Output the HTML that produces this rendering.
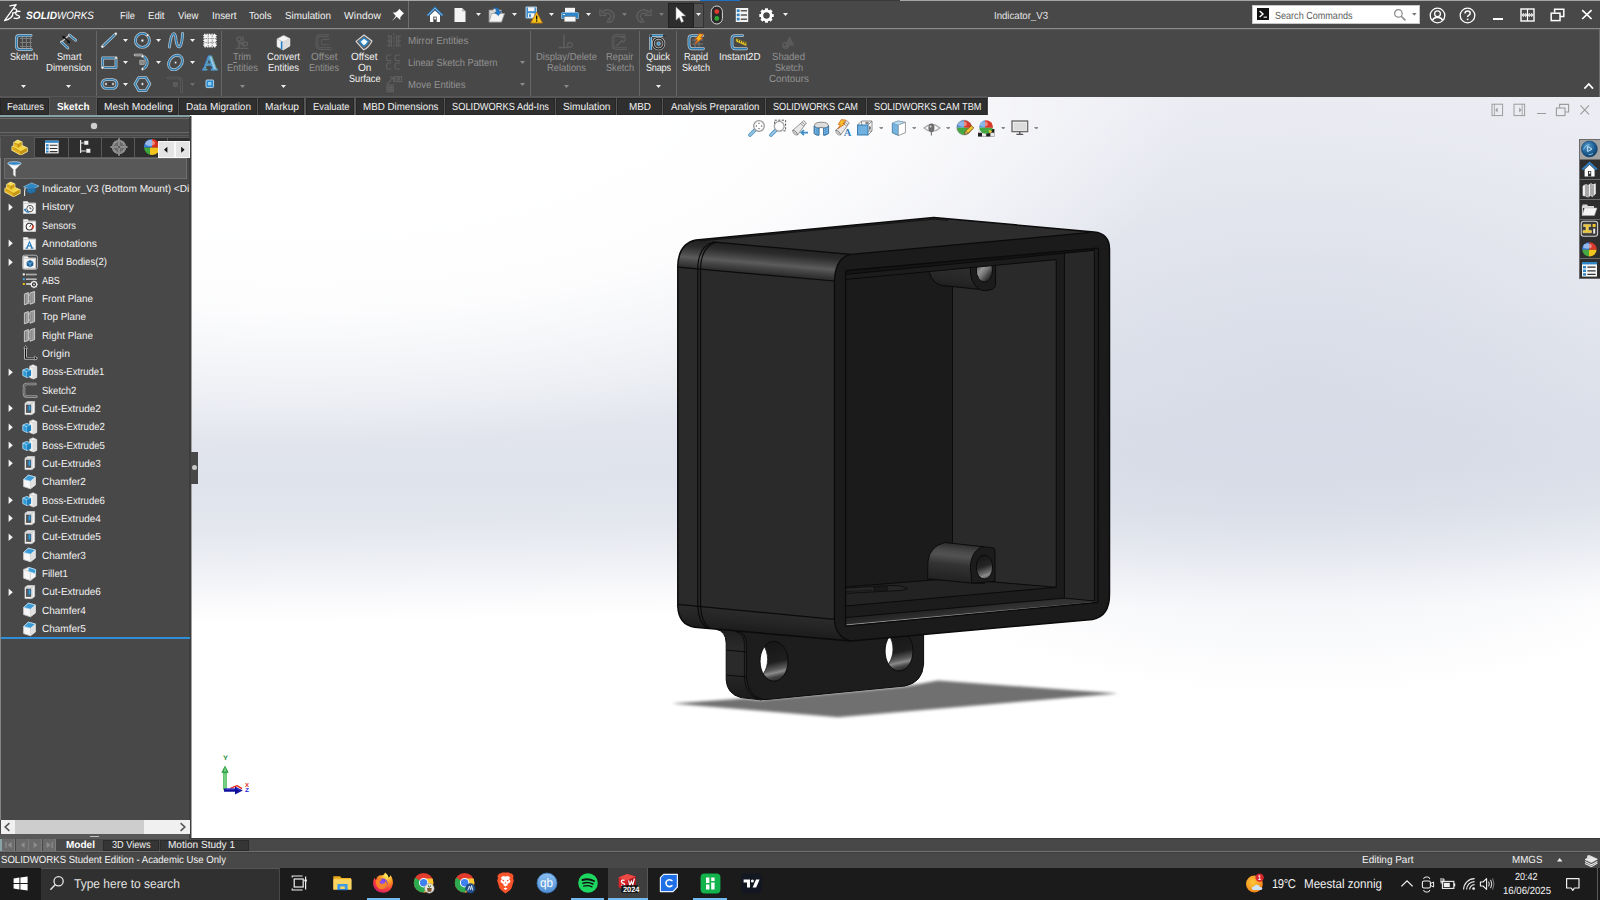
<!DOCTYPE html>
<html><head><meta charset="utf-8"><title>SOLIDWORKS - Indicator_V3</title>
<style>
html,body{margin:0;padding:0;}
body{width:1600px;height:900px;position:relative;overflow:hidden;background:#484848;font-family:"Liberation Sans",sans-serif;}
#root{position:absolute;left:0;top:0;width:1600px;height:900px;overflow:hidden;}
#root div,#root svg,#root span{position:absolute;}
#root span{white-space:nowrap;display:block;transform:rotate(0.03deg);}
</style></head>
<body><div id="root">
<div style="left:190px;top:96px;width:1410px;height:743px;background:radial-gradient(ellipse 900px 350px at 110px 0px, rgba(255,255,255,1) 0%, rgba(255,255,255,0.97) 50%, rgba(255,255,255,0.85) 62%, rgba(255,255,255,0.45) 80%, rgba(255,255,255,0) 100%),radial-gradient(ellipse 540px 310px at 1110px 292px, rgba(206,211,225,0.56) 0%, rgba(206,211,225,0.44) 35%, rgba(206,211,225,0.2) 68%, rgba(206,211,225,0) 100%),linear-gradient(179deg,#ecedf3 0%,#ebecf3 15%,#eaecf2 30%,#e5e8ef 40%,#e1e4ed 46%,#dfe3ec 51%,#e4e7ee 56.5%,#eef0f5 61.5%,#fafafc 66%,#ffffff 69%,#ffffff 100%);"></div>
<div style="left:191px;top:116px;width:1px;height:722.5px;background:#a2a2a2;"></div>
<div style="left:0px;top:0px;width:1600px;height:29px;background:#484848;"></div>
<div style="left:0px;top:0px;width:1600px;height:1px;background:#a6a6a6;"></div>
<div style="left:700px;top:0px;width:40px;height:1px;background:#1f6fc4;"></div>
<div style="left:740px;top:0px;width:160px;height:1px;background:#3a3a3a;"></div>
<div style="left:0px;top:28px;width:1600px;height:1px;background:#8c8c8c;"></div>
<div style="left:0px;top:29px;width:1600px;height:68px;background:#484848;"></div>
<div style="left:0px;top:29px;width:1600px;height:1px;background:#565656;"></div>
<div style="left:1599px;top:29px;width:1px;height:68px;background:#6c6c6c;"></div>
<svg style="left:4px;top:3px;" width="20" height="20"><g fill="none" stroke="#fff" stroke-width="1.35" stroke-linecap="round" stroke-linejoin="round"><path d="M6 2.9 L12.2 1.6 L9 5.8 Q13.4 5.6 12.6 8.2 Q12 9.7 9.8 9.9"/><path d="M8.5 6.6 L0.5 17.6 Q9.4 15.2 8.9 9.6"/><path d="M16 8.4 Q11.4 7.8 11.6 10.4 Q12 12 13.8 12.4 Q16.2 13.2 15.4 14.6 Q14 16 10 15.2"/></g></svg>
<svg style="left:391px;top:8px;" width="14" height="14"><path d="M8.2 0.8 L13 5.6 L11.6 6.4 L9.2 9.4 L9.4 12 L5.6 8.8 L1 13 L4.8 8 L1.8 4.4 L4.6 4.6 L7.4 2.2 Z" fill="#fff"/></svg>
<div style="left:408px;top:1px;width:1px;height:27px;background:#6e6e6e;"></div>
<svg style="left:426px;top:6px;" width="18" height="18"><path d="M1.5 9.5 L9 2 L16.5 9.5" fill="none" stroke="#2f7fc2" stroke-width="2.2" stroke-linejoin="miter"/><path d="M1.5 9.5 L9 2 L16.5 9.5" fill="none" stroke="#9fd0f0" stroke-width="0.6"/><path d="M4 9.2 L9 4.6 L14 9.2 V16 H4 Z" fill="#fff"/><rect x="7.3" y="10.6" width="3.4" height="5.4" fill="#484848"/><rect x="8.3" y="11.4" width="1.6" height="2" fill="#fff"/></svg>
<svg style="left:453px;top:7px;" width="14" height="16"><path d="M1.5 1 H9 L12.5 4.5 V15 H1.5 Z" fill="#f4f4f4"/><path d="M9 1 V4.5 H12.5 Z" fill="#bdbdbd"/></svg>
<svg style="left:475.5px;top:13.0px;" width="5" height="3"><path d="M0 0H5L2.5 3Z" fill="#f0f0f0"/></svg>
<svg style="left:487px;top:5px;" width="19" height="19"><path d="M2 5 H6 L7 3.5 H11 V5 H14.5 V17 H2 Z" fill="#d8d8d8" stroke="#8a8a8a" stroke-width="0.8"/><path d="M4.5 8.5 H17.5 L14.5 17 H2 Z" fill="#f3f3f3" stroke="#9a9a9a" stroke-width="0.8"/><path d="M7 2.5 Q11.5 2 12.2 6.5 L14.4 6.2 L11.4 10.6 L7.6 7.4 L9.8 7 Q9.4 4.2 7 2.5 Z" fill="#1f78c8" stroke="#0f4f90" stroke-width="0.5"/></svg>
<svg style="left:512.0px;top:13.0px;" width="5" height="3"><path d="M0 0H5L2.5 3Z" fill="#f0f0f0"/></svg>
<svg style="left:524px;top:5px;" width="20" height="20"><path d="M2 2 H12.5 V13 H2 Z" fill="#3c8fd0" stroke="#cfe6f7" stroke-width="0.8"/><rect x="4" y="2.4" width="6.5" height="3.8" fill="#f4f4f4"/><rect x="4" y="8.2" width="6.5" height="4.4" fill="#f4f4f4"/><rect x="5" y="9.2" width="2" height="2.6" fill="#3c8fd0"/><path d="M12.6 7 L18.4 18 H6.8 Z" fill="#f5c31c" stroke="#c47a10" stroke-width="0.9" stroke-linejoin="round"/><rect x="12" y="10.6" width="1.3" height="4" fill="#111"/><rect x="12" y="15.3" width="1.3" height="1.4" fill="#111"/></svg>
<svg style="left:548.5px;top:13.0px;" width="5" height="3"><path d="M0 0H5L2.5 3Z" fill="#f0f0f0"/></svg>
<svg style="left:561px;top:7px;" width="18" height="16"><rect x="4" y="0.8" width="10" height="5" fill="#f4f4f4"/><path d="M1.5 5.5 H16.5 Q17.5 5.5 17.5 6.5 V11.5 H0.5 V6.5 Q0.5 5.5 1.5 5.5 Z" fill="#2f86c8" stroke="#a9d4f2" stroke-width="0.6"/><rect x="3.2" y="9.6" width="11.6" height="5.2" fill="#f7f7f7" stroke="#777" stroke-width="0.5"/><rect x="1.8" y="7" width="2.2" height="1" fill="#d6ecfa"/></svg>
<svg style="left:585.5px;top:13.0px;" width="5" height="3"><path d="M0 0H5L2.5 3Z" fill="#f0f0f0"/></svg>
<svg style="left:599px;top:7px;" width="16" height="16"><path d="M4.2 7 A4.9 4.9 0 1 1 9.6 14.2" fill="none" stroke="#686868" stroke-width="4.6"/><path d="M4.2 7 A4.9 4.9 0 1 1 9.6 14.2" fill="none" stroke="#4d4d4d" stroke-width="3"/><path d="M0.8 2.2 V8.6 H7.2 Z" fill="#4d4d4d" stroke="#686868" stroke-width="0.8"/><path d="M9.6 11.6 L7.6 15.4 L11.6 15.2 Z" fill="#4d4d4d" stroke="#686868" stroke-width="0.7"/></svg>
<svg style="left:622.0px;top:13.0px;" width="5" height="3"><path d="M0 0H5L2.5 3Z" fill="#7a7a7a"/></svg>
<svg style="left:635.5px;top:7px;" width="16" height="16"><g transform="translate(16 0) scale(-1 1)"><path d="M4.2 7 A4.9 4.9 0 1 1 9.6 14.2" fill="none" stroke="#686868" stroke-width="4.6"/><path d="M4.2 7 A4.9 4.9 0 1 1 9.6 14.2" fill="none" stroke="#4d4d4d" stroke-width="3"/><path d="M0.8 2.2 V8.6 H7.2 Z" fill="#4d4d4d" stroke="#686868" stroke-width="0.8"/><path d="M9.6 11.6 L7.6 15.4 L11.6 15.2 Z" fill="#4d4d4d" stroke="#686868" stroke-width="0.7"/></g></svg>
<svg style="left:658.5px;top:13.0px;" width="5" height="3"><path d="M0 0H5L2.5 3Z" fill="#7a7a7a"/></svg>
<div style="left:667.5px;top:2.5px;width:26px;height:25px;background:#2d2d2d;border:1px solid #222;box-sizing:border-box;"></div>
<div style="left:693.5px;top:2.5px;width:10.5px;height:25px;background:#505050;border:1px solid #333;border-left:none;box-sizing:border-box;"></div>
<svg style="left:674px;top:6px;" width="14" height="18"><path d="M2 1 V14.2 L5.2 11.2 L7.4 16.4 L9.6 15.4 L7.4 10 H11.6 Z" fill="#fff" stroke="#999" stroke-width="0.5"/></svg>
<svg style="left:695.5px;top:13.0px;" width="5" height="3"><path d="M0 0H5L2.5 3Z" fill="#f0f0f0"/></svg>
<svg style="left:710px;top:5px;" width="14" height="20"><rect x="1.2" y="1" width="11.2" height="18" rx="5.6" fill="#2a2a2a" stroke="#d8d8d8" stroke-width="1"/><circle cx="6.8" cy="6.6" r="2.4" fill="#e03a2c"/><circle cx="6.8" cy="13.4" r="2.4" fill="#2fa835"/></svg>
<svg style="left:735px;top:7px;" width="14" height="16"><rect x="0.8" y="1" width="12.4" height="14" fill="#f2f2f2"/><rect x="1.8" y="2.4" width="2.8" height="2.6" fill="#2d82c6"/><rect x="1.8" y="6.6" width="2.8" height="2.6" fill="#2d82c6"/><rect x="1.8" y="10.8" width="2.8" height="2.6" fill="#2d82c6"/><rect x="5.8" y="3.2" width="6.2" height="1.2" fill="#333"/><rect x="5.8" y="7.4" width="6.2" height="1.2" fill="#333"/><rect x="5.8" y="11.6" width="6.2" height="1.2" fill="#333"/></svg>
<svg style="left:759px;top:7.5px;" width="15" height="15"><g transform="translate(7.5 7.5)"><g fill="#fff"><rect x="-1.5" y="-7.2" width="3" height="3.6" transform="rotate(0)"/><rect x="-1.5" y="-7.2" width="3" height="3.6" transform="rotate(45)"/><rect x="-1.5" y="-7.2" width="3" height="3.6" transform="rotate(90)"/><rect x="-1.5" y="-7.2" width="3" height="3.6" transform="rotate(135)"/><rect x="-1.5" y="-7.2" width="3" height="3.6" transform="rotate(180)"/><rect x="-1.5" y="-7.2" width="3" height="3.6" transform="rotate(225)"/><rect x="-1.5" y="-7.2" width="3" height="3.6" transform="rotate(270)"/><rect x="-1.5" y="-7.2" width="3" height="3.6" transform="rotate(315)"/></g><circle r="4.6" fill="none" stroke="#fff" stroke-width="2.6"/></g></svg>
<svg style="left:782.5px;top:13.0px;" width="5" height="3"><path d="M0 0H5L2.5 3Z" fill="#f0f0f0"/></svg>
<div style="left:1251.5px;top:5px;width:168.5px;height:18.5px;background:#ffffff;border:1px solid #c8c8c8;box-sizing:border-box;"></div>
<div style="left:1257px;top:8px;width:12px;height:12px;background:#111;"></div>
<svg style="left:1257px;top:8px;" width="12" height="12"><path d="M2.6 3 L6 6 L2.6 9" fill="none" stroke="#fff" stroke-width="1.4"/><rect x="6.6" y="8.6" width="3.4" height="1.1" fill="#fff"/></svg>
<svg style="left:1393px;top:8px;" width="14" height="14"><circle cx="5.4" cy="5.4" r="3.8" fill="none" stroke="#8a8a8a" stroke-width="1.2"/><path d="M8.2 8.2 L12.4 12.4" stroke="#8a8a8a" stroke-width="1.6"/></svg>
<svg style="left:1412.2px;top:13.1px;" width="4.6" height="2.8"><path d="M0 0H4.6L2.3 2.8Z" fill="#777"/></svg>
<svg style="left:1429px;top:6.5px;" width="17" height="17"><circle cx="8.5" cy="8.5" r="7.3" fill="none" stroke="#fff" stroke-width="1.3"/><circle cx="8.5" cy="6.8" r="2.9" fill="none" stroke="#fff" stroke-width="1.3"/><path d="M3.4 13.4 Q5 10 8.5 10.6 Q12 10 13.6 13.4" fill="none" stroke="#fff" stroke-width="1.3"/></svg>
<svg style="left:1459px;top:6.5px;" width="17" height="17"><circle cx="8.5" cy="8.5" r="7.3" fill="none" stroke="#fff" stroke-width="1.3"/><path d="M6 6.6 Q6 4 8.6 4 Q11.2 4 11.2 6.2 Q11.2 7.6 9.6 8.4 Q8.6 9 8.6 10" fill="none" stroke="#fff" stroke-width="1.5"/><rect x="7.8" y="11.6" width="1.6" height="1.6" fill="#fff"/></svg>
<div style="left:1493px;top:18px;width:9.5px;height:2.2px;background:#ffffff;"></div>
<svg style="left:1520px;top:8px;" width="15" height="14"><rect x="1" y="1" width="13" height="12" fill="none" stroke="#fff" stroke-width="1.4"/><path d="M7.5 1 V13" stroke="#fff" stroke-width="1.2"/><path d="M2.6 7 H6.4 M8.6 7 H12.4" stroke="#fff" stroke-width="1.3"/><path d="M3.8 5 L1.8 7 L3.8 9 M5.2 5 L7.2 7 L5.2 9 M9.8 5 L7.8 7 L9.8 9 M11.2 5 L13.2 7 L11.2 9" fill="none" stroke="#fff" stroke-width="0.9"/></svg>
<svg style="left:1550px;top:8px;" width="15" height="14"><path d="M4.6 4.4 V1.2 H13.8 V8.4 H10" fill="none" stroke="#fff" stroke-width="1.5"/><rect x="1.2" y="5.2" width="8.8" height="7.4" fill="none" stroke="#fff" stroke-width="1.5"/></svg>
<svg style="left:1581px;top:9px;" width="12" height="12"><path d="M1.2 1.2 L10.6 10 M10.6 1.2 L1.2 10" stroke="#fff" stroke-width="1.7"/></svg>
<svg style="left:1583px;top:82px;" width="12" height="8"><path d="M1.4 6.6 L5.8 2 L10 6.6" fill="none" stroke="#fff" stroke-width="1.7"/></svg>
<div style="left:0px;top:96.4px;width:987.6px;height:18.8px;background:#565656;"></div>
<div style="left:-0.19999999999999996px;top:97.6px;width:48.7px;height:17.4px;background:#2f2f2f;border:1px solid #272727;box-sizing:border-box;"></div>
<div style="left:50.099999999999994px;top:97.2px;width:45.7px;height:19px;background:#484848;"></div>
<div style="left:97.39999999999999px;top:97.6px;width:80.39999999999999px;height:17.4px;background:#2f2f2f;border:1px solid #272727;box-sizing:border-box;"></div>
<div style="left:179.4px;top:97.6px;width:77.19999999999996px;height:17.4px;background:#2f2f2f;border:1px solid #272727;box-sizing:border-box;"></div>
<div style="left:258.2px;top:97.6px;width:46.0px;height:17.4px;background:#2f2f2f;border:1px solid #272727;box-sizing:border-box;"></div>
<div style="left:305.8px;top:97.6px;width:48.599999999999966px;height:17.4px;background:#2f2f2f;border:1px solid #272727;box-sizing:border-box;"></div>
<div style="left:356.0px;top:97.6px;width:87.80000000000001px;height:17.4px;background:#2f2f2f;border:1px solid #272727;box-sizing:border-box;"></div>
<div style="left:445.40000000000003px;top:97.6px;width:109.19999999999999px;height:17.4px;background:#2f2f2f;border:1px solid #272727;box-sizing:border-box;"></div>
<div style="left:556.1999999999999px;top:97.6px;width:59.40000000000009px;height:17.4px;background:#2f2f2f;border:1px solid #272727;box-sizing:border-box;"></div>
<div style="left:617.1999999999999px;top:97.6px;width:44.600000000000136px;height:17.4px;background:#2f2f2f;border:1px solid #272727;box-sizing:border-box;"></div>
<div style="left:663.4px;top:97.6px;width:101.20000000000005px;height:17.4px;background:#2f2f2f;border:1px solid #272727;box-sizing:border-box;"></div>
<div style="left:766.1999999999999px;top:97.6px;width:99.60000000000014px;height:17.4px;background:#2f2f2f;border:1px solid #272727;box-sizing:border-box;"></div>
<div style="left:867.4px;top:97.6px;width:119.20000000000005px;height:17.4px;background:#2f2f2f;border:1px solid #272727;box-sizing:border-box;"></div>
<div style="left:986.8px;top:96.4px;width:0.8px;height:18.8px;background:#4a4a4a;"></div>
<div style="left:0px;top:116px;width:190.5px;height:723px;background:#484848;"></div>
<div style="left:0px;top:115.4px;width:190px;height:1.5px;background:#86a2a5;"></div>
<div style="left:0px;top:118px;width:189px;height:1px;background:#686868;"></div>
<div style="left:0px;top:132px;width:189px;height:1px;background:#6a6a6a;"></div>
<div style="left:0px;top:134.5px;width:189px;height:1px;background:#5a5a5a;"></div>
<div style="left:91px;top:123px;width:6px;height:6px;border-radius:3px;background:#cfcfcf;box-shadow:0 0 1px #eee;"></div>
<div style="left:189px;top:117px;width:2px;height:722px;background:#3d3d3d;"></div>
<div style="left:0px;top:158px;width:1.2px;height:662px;background:#858585;"></div>
<div style="left:190.5px;top:452px;width:7.5px;height:32px;background:#484848;"></div>
<div style="left:191.8px;top:464.6px;width:5px;height:5px;border-radius:2.5px;background:#c8c8c8;"></div>
<div style="left:0px;top:838px;width:1600px;height:30px;background:#484848;"></div>
<div style="left:190px;top:838.4px;width:1410px;height:1.1px;background:#383838;"></div>
<div style="left:0px;top:851px;width:1600px;height:1px;background:#707070;"></div>
<div style="left:0px;top:852px;width:1600px;height:1px;background:#3e3e3e;"></div>
<div style="left:1px;top:820px;width:188.5px;height:14px;background:#f0f0f0;"></div>
<div style="left:15px;top:820px;width:129px;height:14px;background:#cdcdcd;"></div>
<svg style="left:3px;top:822px;" width="8" height="10"><path d="M6.4 1.2 L2.2 5 L6.4 8.8" fill="none" stroke="#555" stroke-width="1.6"/></svg>
<svg style="left:179px;top:822px;" width="8" height="10"><path d="M1.6 1.2 L5.8 5 L1.6 8.8" fill="none" stroke="#555" stroke-width="1.6"/></svg>
<div style="left:0px;top:834px;width:189px;height:4.5px;background:#585858;"></div>
<div style="left:90px;top:835.6px;width:9px;height:1.4px;background:#bdbdbd;"></div>
<div style="left:0px;top:839px;width:2px;height:12px;background:#8aa3a6;"></div>
<div style="left:2px;top:839px;width:13px;height:12px;background:#6b6b6b;border-right:1px solid #7c7c7c;box-sizing:border-box;"></div>
<div style="left:15.5px;top:839px;width:13px;height:12px;background:#6b6b6b;border-right:1px solid #7c7c7c;box-sizing:border-box;"></div>
<div style="left:29px;top:839px;width:13px;height:12px;background:#6b6b6b;border-right:1px solid #7c7c7c;box-sizing:border-box;"></div>
<div style="left:42.5px;top:839px;width:13px;height:12px;background:#6b6b6b;border-right:1px solid #7c7c7c;box-sizing:border-box;"></div>
<svg style="left:2px;top:839px;" width="13" height="12"><path d="M4 3 V9" stroke="#8e8e8e" stroke-width="1.2"/><path d="M9.6 3 L5.6 6 L9.6 9 Z" fill="#8e8e8e"/></svg>
<svg style="left:15.5px;top:839px;" width="13" height="12"><path d="M8.6 3 L4.6 6 L8.6 9 Z" fill="#8e8e8e"/></svg>
<svg style="left:29px;top:839px;" width="13" height="12"><path d="M4.6 3 L8.6 6 L4.6 9 Z" fill="#8e8e8e"/></svg>
<svg style="left:42.5px;top:839px;" width="13" height="12"><path d="M3.6 3 L7.6 6 L3.6 9 Z" fill="#8e8e8e"/><path d="M9.2 3 V9" stroke="#8e8e8e" stroke-width="1.2"/></svg>
<div style="left:56px;top:839px;width:46px;height:12px;background:#484848;"></div>
<div style="left:103px;top:839.5px;width:55.5px;height:11.5px;background:#353535;border:1px solid #2a2a2a;box-sizing:border-box;"></div>
<div style="left:160px;top:839.5px;width:89px;height:11.5px;background:#353535;border:1px solid #2a2a2a;box-sizing:border-box;"></div>
<svg style="left:1557px;top:858px;" width="6" height="4"><path d="M0 3.4 H5.4 L2.7 0 Z" fill="#f0f0f0"/></svg>
<svg style="left:1584px;top:853px;" width="15" height="14"><path d="M1 6.5 L7 3.2 L13.4 6.2 L7.4 9.6 Z" fill="#e8e8e8" stroke="#fff" stroke-width="0.6"/><path d="M1 8.6 L7.4 11.8 L13.4 8.4" fill="none" stroke="#e8e8e8" stroke-width="1.1"/><path d="M1 10.6 L7.4 13.6 L13.4 10" fill="none" stroke="#e8e8e8" stroke-width="1.1"/><circle cx="5" cy="4" r="2" fill="#ddd"/></svg>
<div style="left:96.4px;top:31px;width:1px;height:65px;background:#666666;"></div>
<div style="left:221.4px;top:31px;width:1px;height:65px;background:#666666;"></div>
<div style="left:530.4px;top:31px;width:1px;height:65px;background:#666666;"></div>
<div style="left:639.4px;top:31px;width:1px;height:65px;background:#666666;"></div>
<div style="left:676.4px;top:31px;width:1px;height:65px;background:#666666;"></div>
<svg style="left:14px;top:33px;" width="20" height="20"><g stroke="#7c7c7c" stroke-width="1"><path d="M6 5.5 H18 M6 9.5 H18 M6 13.5 H18 M8.5 3.5 V16 M12.5 3.5 V16 M16.5 3.5 V16"/></g><path d="M17 2.4 H5.4 Q2.4 2.4 2.4 5.4 V13 Q2.4 16.6 6 16.6 H17.4" fill="none" stroke="#bcc3c8" stroke-width="2.9" stroke-linecap="round" stroke-linejoin="round" /><path d="M17 2.4 H5.4 Q2.4 2.4 2.4 5.4 V13 Q2.4 16.6 6 16.6 H17.4" fill="none" stroke="#2a7db4" stroke-width="1.45" stroke-linecap="round" stroke-linejoin="round" /></svg>
<svg style="left:20.5px;top:84.5px;" width="5" height="3"><path d="M0 0H5L2.5 3Z" fill="#f0f0f0"/></svg>
<svg style="left:58px;top:32px;" width="20" height="20"><path d="M11.4 3 L17.6 8.2" fill="none" stroke="#bcc3c8" stroke-width="2.9" stroke-linecap="round" stroke-linejoin="round" /><path d="M11.4 3 L17.6 8.2" fill="none" stroke="#2a7db4" stroke-width="1.45" stroke-linecap="round" stroke-linejoin="round" /><path d="M3.4 10 L9.8 16" fill="none" stroke="#bcc3c8" stroke-width="2.9" stroke-linecap="round" stroke-linejoin="round" /><path d="M3.4 10 L9.8 16" fill="none" stroke="#2a7db4" stroke-width="1.45" stroke-linecap="round" stroke-linejoin="round" /><path d="M11.4 3 L3.4 10" stroke="#c9c9c9" stroke-width="1.4" fill="none"/><path d="M5 4.6 L11.4 10" stroke="#111" stroke-width="1.3"/><path d="M4 3.8 L7.6 4.6 L5.2 7 Z M12.4 11.2 L8.8 10.6 L11 8.2 Z" fill="#111"/></svg>
<svg style="left:66.0px;top:84.5px;" width="5" height="3"><path d="M0 0H5L2.5 3Z" fill="#f0f0f0"/></svg>
<svg style="left:100px;top:31px;" width="20" height="18"><path d="M2.6 15.4 L15.6 3" fill="none" stroke="#bcc3c8" stroke-width="2.9" stroke-linecap="round" stroke-linejoin="round" /><path d="M2.6 15.4 L15.6 3" fill="none" stroke="#2a7db4" stroke-width="1.45" stroke-linecap="round" stroke-linejoin="round" /><circle cx="15.8" cy="2.8" r="1.4" fill="#fff" stroke="#555" stroke-width="0.5"/><circle cx="2.4" cy="15.6" r="1.4" fill="#fff" stroke="#555" stroke-width="0.5"/></svg>
<svg style="left:123.0px;top:39.0px;" width="5" height="3"><path d="M0 0H5L2.5 3Z" fill="#f0f0f0"/></svg>
<svg style="left:133px;top:31px;" width="20" height="18"><path d="M2.4 9.4 A7 7 0 1 0 16.4 9.4 A7 7 0 1 0 2.4 9.4" fill="none" stroke="#bcc3c8" stroke-width="2.9" stroke-linecap="round" stroke-linejoin="round" /><path d="M2.4 9.4 A7 7 0 1 0 16.4 9.4 A7 7 0 1 0 2.4 9.4" fill="none" stroke="#2a7db4" stroke-width="1.45" stroke-linecap="round" stroke-linejoin="round" /><circle cx="9.4" cy="9.6" r="1.3" fill="#fff" stroke="#555" stroke-width="0.5"/><circle cx="14.6" cy="4.2" r="1.3" fill="#fff" stroke="#555" stroke-width="0.5"/></svg>
<svg style="left:156.0px;top:39.0px;" width="5" height="3"><path d="M0 0H5L2.5 3Z" fill="#f0f0f0"/></svg>
<svg style="left:166px;top:31px;" width="20" height="18"><path d="M3.4 16 Q5 2.6 7.6 2.8 Q9.8 3 10 9.4 Q11.2 16.4 13.4 15.8 Q16 14.6 16.6 2.4" fill="none" stroke="#bcc3c8" stroke-width="2.9" stroke-linecap="round" stroke-linejoin="round" /><path d="M3.4 16 Q5 2.6 7.6 2.8 Q9.8 3 10 9.4 Q11.2 16.4 13.4 15.8 Q16 14.6 16.6 2.4" fill="none" stroke="#2a7db4" stroke-width="1.45" stroke-linecap="round" stroke-linejoin="round" /></svg>
<svg style="left:189.5px;top:39.0px;" width="5" height="3"><path d="M0 0H5L2.5 3Z" fill="#f0f0f0"/></svg>
<svg style="left:202px;top:32px;" width="16" height="17"><rect x="2.2" y="2.6" width="11.6" height="12" fill="#f4f4f4" stroke="#ffffff" stroke-width="1.8" stroke-dasharray="1.3 1.1"/><path d="M6.2 1 V16 M10.2 1 V16 M1 6.6 H15.2 M1 10.6 H15.2" stroke="#8a8a8a" stroke-width="0.9" stroke-dasharray="1.6 0.8"/></svg>
<svg style="left:100px;top:53px;" width="20" height="18"><path d="M2.6 5 H16 V14.6 H2.6 Z" fill="none" stroke="#bcc3c8" stroke-width="2.9" stroke-linecap="round" stroke-linejoin="round" /><path d="M2.6 5 H16 V14.6 H2.6 Z" fill="none" stroke="#2a7db4" stroke-width="1.45" stroke-linecap="round" stroke-linejoin="round" /><circle cx="16" cy="5" r="1.4" fill="#fff" stroke="#555" stroke-width="0.5"/><circle cx="2.6" cy="14.6" r="1.4" fill="#fff" stroke="#555" stroke-width="0.5"/></svg>
<svg style="left:123.0px;top:61.0px;" width="5" height="3"><path d="M0 0H5L2.5 3Z" fill="#f0f0f0"/></svg>
<svg style="left:133px;top:53px;" width="20" height="18"><rect x="6.8" y="7.2" width="4.4" height="4.4" fill="#8a8a8a" stroke="#bbb" stroke-width="0.6"/><path d="M9.6 3.2 A6.8 6.8 0 0 1 9.6 16" fill="none" stroke="#bcc3c8" stroke-width="2.9" stroke-linecap="round" stroke-linejoin="round" /><path d="M9.6 3.2 A6.8 6.8 0 0 1 9.6 16" fill="none" stroke="#2a7db4" stroke-width="1.45" stroke-linecap="round" stroke-linejoin="round" /><path d="M2 2 H8.6" stroke="#d8d8d8" stroke-width="2.4" stroke-linecap="round"/><path d="M2 2 H8.6" stroke="#555" stroke-width="1" stroke-linecap="round"/><circle cx="9.6" cy="3.2" r="1.3" fill="#fff" stroke="#555" stroke-width="0.5"/><circle cx="9.6" cy="16" r="1.3" fill="#fff" stroke="#555" stroke-width="0.5"/></svg>
<svg style="left:156.0px;top:61.0px;" width="5" height="3"><path d="M0 0H5L2.5 3Z" fill="#f0f0f0"/></svg>
<svg style="left:166px;top:53px;" width="20" height="18"><path d="M2.6 12 A5.6 7.4 40 1 0 16.4 7 A5.6 7.4 40 1 0 2.6 12" fill="none" stroke="#bcc3c8" stroke-width="2.9" stroke-linecap="round" stroke-linejoin="round" /><path d="M2.6 12 A5.6 7.4 40 1 0 16.4 7 A5.6 7.4 40 1 0 2.6 12" fill="none" stroke="#2a7db4" stroke-width="1.45" stroke-linecap="round" stroke-linejoin="round" /><circle cx="9.6" cy="9.6" r="1.1" fill="#fff" stroke="#555" stroke-width="0.5"/></svg>
<svg style="left:189.5px;top:61.0px;" width="5" height="3"><path d="M0 0H5L2.5 3Z" fill="#f0f0f0"/></svg>
<svg style="left:199.5px;top:52px;" width="20" height="20"><text x="10" y="17.6" text-anchor="middle" font-family="Liberation Serif" font-weight="bold" font-size="21" fill="#9fcbe6" stroke="#2a7db4" stroke-width="1">A</text><text x="10" y="17.6" text-anchor="middle" font-family="Liberation Serif" font-weight="bold" font-size="21" fill="none" stroke="#d6e8f3" stroke-width="0.35" stroke-dasharray="0.8 0.8">A</text></svg>
<svg style="left:100px;top:75px;" width="20" height="18"><path d="M6.4 4.6 H12.6 A4.4 4.4 0 0 1 12.6 13.4 H6.4 A4.4 4.4 0 0 1 6.4 4.6 Z" fill="none" stroke="#bcc3c8" stroke-width="2.9" stroke-linecap="round" stroke-linejoin="round" /><path d="M6.4 4.6 H12.6 A4.4 4.4 0 0 1 12.6 13.4 H6.4 A4.4 4.4 0 0 1 6.4 4.6 Z" fill="none" stroke="#2a7db4" stroke-width="1.45" stroke-linecap="round" stroke-linejoin="round" /><path d="M6.2 9 H12.8" stroke="#111" stroke-width="1" stroke-dasharray="1.4 1.2"/><circle cx="6" cy="9" r="1.2" fill="#fff" stroke="#555" stroke-width="0.5"/><circle cx="13" cy="9" r="1.2" fill="#fff" stroke="#555" stroke-width="0.5"/></svg>
<svg style="left:123.0px;top:83.0px;" width="5" height="3"><path d="M0 0H5L2.5 3Z" fill="#f0f0f0"/></svg>
<svg style="left:133px;top:75px;" width="20" height="18"><path d="M5.8 2.6 H13 L16.8 9 L13 15.6 H5.8 L2 9 Z" fill="none" stroke="#bcc3c8" stroke-width="2.9" stroke-linecap="round" stroke-linejoin="round" /><path d="M5.8 2.6 H13 L16.8 9 L13 15.6 H5.8 L2 9 Z" fill="none" stroke="#2a7db4" stroke-width="1.45" stroke-linecap="round" stroke-linejoin="round" /><circle cx="9.4" cy="9" r="1.2" fill="#fff" stroke="#555" stroke-width="0.5"/></svg>
<svg style="left:166px;top:74px;" width="20" height="20"><path d="M2.4 4 H11 Q15.6 4 15.6 8.6 V18" fill="none" stroke="#5e5e5e" stroke-width="2.6" stroke-linecap="round"/><path d="M2.4 4 H11 Q15.6 4 15.6 8.6 V18" fill="none" stroke="#444" stroke-width="1"/><rect x="7.4" y="8.6" width="4" height="4" fill="#5a5a5a" stroke="#666" stroke-width="0.5"/></svg>
<svg style="left:189.5px;top:83.0px;" width="5" height="3"><path d="M0 0H5L2.5 3Z" fill="#6e6e6e"/></svg>
<svg style="left:205px;top:79px;" width="10" height="10"><rect x="1" y="1" width="7.6" height="7.6" rx="1" fill="#2f8bcb" stroke="#bcdcf2" stroke-width="0.9"/><rect x="3" y="3" width="3.4" height="3.4" fill="#8fd0f5"/></svg>
<svg style="left:233px;top:33px;" width="18" height="18"><g fill="none" stroke="#5f5f5f" stroke-width="1.3"><path d="M2.6 15.4 H15.4 M6 15.4 V10 H10 V3"/><circle cx="6" cy="6" r="2.2"/><circle cx="12.6" cy="10.8" r="2"/><path d="M4.6 7.8 L11 13.6"/></g></svg>
<div style="left:233px;top:61.6px;width:4.4px;height:0.9px;background:#929292;"></div>
<svg style="left:239.5px;top:84.5px;" width="5" height="3"><path d="M0 0H5L2.5 3Z" fill="#8a8a8a"/></svg>
<svg style="left:275px;top:33px;" width="17" height="19"><path d="M2 6 L8.6 2.4 L15 5.6 V13 L8.2 17 L2 13.6 Z" fill="#f4f4f4" stroke="#d0d0d0" stroke-width="0.6"/><path d="M2 6 L8.2 9 L15 5.6 M8.2 9 V17" fill="none" stroke="#bdbdbd" stroke-width="0.8"/><path d="M8.2 9 V17 L15 13 V5.6 Z" fill="#dcdcdc"/><path d="M6.6 8.4 V16.2" stroke="#1f7dc4" stroke-width="1.6"/></svg>
<svg style="left:280.5px;top:84.5px;" width="5" height="3"><path d="M0 0H5L2.5 3Z" fill="#f0f0f0"/></svg>
<svg style="left:314px;top:33px;" width="20" height="19"><path d="M15 2.6 H6.4 Q3 2.6 3 6 V11.6 Q3 15.6 7 15.6 H17.4" fill="none" stroke="#5d5d5d" stroke-width="2.8" stroke-linejoin="round"/><path d="M15 2.6 H6.4 Q3 2.6 3 6 V11.6 Q3 15.6 7 15.6 H17.4" fill="none" stroke="#484848" stroke-width="0.9"/><path d="M15 6.4 H9 Q7.4 6.4 7.4 8 V10 Q7.4 11.8 9.2 11.8 H15.6" fill="none" stroke="#5a5a5a" stroke-width="1.1"/></svg>
<svg style="left:354px;top:33px;" width="20" height="19"><path d="M2 8.4 L10 2 L18 8 Q15 14.6 9.6 16.8 Z" fill="#5c5c5c" stroke="#d8d8d8" stroke-width="1.1" stroke-linejoin="round"/><path d="M5.6 8.6 L10 5 L14.6 8.4 Q12.6 12 9.6 13.2 Z" fill="#f4fbff" stroke="#2b86c5" stroke-width="1.5" stroke-linejoin="round"/></svg>
<svg style="left:385px;top:32px;" width="18" height="18"><g fill="none" stroke="#5e5e5e" stroke-width="1.2"><path d="M9 1 V17" stroke-dasharray="2.4 1.4"/><path d="M2 4 H6.4 V14 H2 M4.2 4 V14 M2 9 H6.4"/><path d="M16 4 H11.6 V14 H16 M13.8 4 V14 M11.6 9 H16"/></g></svg>
<svg style="left:385px;top:53px;" width="18" height="18"><g fill="none" stroke="#5e5e5e" stroke-width="1.2"><path d="M6.4 2 H3.4 Q1.6 2 1.6 3.8 V6 Q1.6 7.6 3.4 7.6 H6.4 M15 2 H12 Q10 2 10 3.8 V6 Q10 7.6 12 7.6 H15"/><path d="M6.4 10 H3.4 Q1.6 10 1.6 12.2 V14.4 Q1.6 16 3.4 16 H6.4 M15 10 H12 Q10 10 10 12.2 V14.4 Q10 16 12 16 H15"/></g></svg>
<svg style="left:520.0px;top:61.0px;" width="5" height="3"><path d="M0 0H5L2.5 3Z" fill="#8a8a8a"/></svg>
<svg style="left:385px;top:75px;" width="18" height="18"><g fill="none" stroke="#5e5e5e" stroke-width="1.2"><rect x="9.6" y="1.6" width="7" height="5"/><rect x="12" y="3" width="2.4" height="2"/><path d="M2 9 L8.4 2.6 M4.6 2.4 H8.6 V6.4"/><path d="M2 10 H8.4 V16.6 H2 Z M4.2 10 V16.6 M6.2 10 V16.6 M2 12.6 H8.4 M2 14.6 H8.4"/></g></svg>
<svg style="left:520.0px;top:83.0px;" width="5" height="3"><path d="M0 0H5L2.5 3Z" fill="#8a8a8a"/></svg>
<svg style="left:556px;top:33px;" width="20" height="18"><g fill="none" stroke="#5e5e5e" stroke-width="1.5"><path d="M8 1.6 V14 M2.6 14.4 H13.4"/><circle cx="14" cy="12" r="2.4" stroke-width="1.1"/></g></svg>
<svg style="left:563.5px;top:84.5px;" width="5" height="3"><path d="M0 0H5L2.5 3Z" fill="#8a8a8a"/></svg>
<svg style="left:610px;top:33px;" width="20" height="19"><g fill="none" stroke="#5e5e5e"><path d="M15.6 2.6 H6 Q3 2.6 3 5.6 V12 Q3 15.6 6.6 15.6 H17" stroke-width="2.6" stroke-linejoin="round"/><path d="M6.4 13 L12.6 6.8 M11 4.6 Q14.6 3.4 15.6 6.8 Q14 9.6 11.6 8.6" stroke-width="1.2"/></g><path d="M15.6 2.6 H6 Q3 2.6 3 5.6 V12 Q3 15.6 6.6 15.6 H17" fill="none" stroke="#484848" stroke-width="0.8"/></svg>
<svg style="left:648px;top:33px;" width="20" height="19"><path d="M2.6 17 V2.6 H16.6" fill="none" stroke="#c9c9c9" stroke-width="2.8"/><path d="M2.6 17 V2.6 H16.6" fill="none" stroke="#2b86c5" stroke-width="1.5"/><rect x="1.4" y="1.4" width="2.4" height="2.4" fill="#333"/><rect x="15" y="1.4" width="2.4" height="2.4" fill="#333"/><circle cx="10.6" cy="10.6" r="5.4" fill="none" stroke="#d0d0d0" stroke-width="2.6"/><circle cx="10.6" cy="10.6" r="5.4" fill="none" stroke="#222" stroke-width="1.3"/><circle cx="10.6" cy="10.6" r="1.7" fill="#2f8fd2" stroke="#cfe6f5" stroke-width="0.6"/></svg>
<svg style="left:655.5px;top:84.5px;" width="5" height="3"><path d="M0 0H5L2.5 3Z" fill="#f0f0f0"/></svg>
<svg style="left:686px;top:33px;" width="20" height="19"><g stroke="#777" stroke-width="1"><path d="M6 7 H17 M6 11 H17 M9 4 V14 M13 4 V14"/></g><path d="M16.8 2.6 H6 Q3 2.6 3 5.6 V12 Q3 15.8 6.6 15.8 H17.4" fill="none" stroke="#bcc3c8" stroke-width="2.9" stroke-linecap="round" stroke-linejoin="round" /><path d="M16.8 2.6 H6 Q3 2.6 3 5.6 V12 Q3 15.8 6.6 15.8 H17.4" fill="none" stroke="#2a7db4" stroke-width="1.45" stroke-linecap="round" stroke-linejoin="round" /><path d="M13.4 0.8 L17.6 1.2 L14.6 4.6 L16.8 5 L9 11 L11.6 6.8 L9.4 6.4 Z" fill="#f6b61c" stroke="#c8541a" stroke-width="0.8" stroke-linejoin="round"/></svg>
<svg style="left:729px;top:33px;" width="20" height="19"><path d="M13.6 2.6 H6 Q3 2.6 3 5.6 V12 Q3 15.8 6.6 15.8 H17.4" fill="none" stroke="#bcc3c8" stroke-width="2.9" stroke-linecap="round" stroke-linejoin="round" /><path d="M13.6 2.6 H6 Q3 2.6 3 5.6 V12 Q3 15.8 6.6 15.8 H17.4" fill="none" stroke="#2a7db4" stroke-width="1.45" stroke-linecap="round" stroke-linejoin="round" /><path d="M6.6 8.6 L16.6 13" stroke="#555" stroke-width="1"/><path d="M7 5.6 L17.4 9.4 V13 L7 8.6 Z" fill="#f2cf2e" stroke="#7a6a1a" stroke-width="0.6"/><path d="M9.4 6.6 V8.4 M11.6 7.4 V9.4 M13.8 8.2 V10 M15.8 9 V11" stroke="#333" stroke-width="0.9"/></svg>
<svg style="left:780px;top:34px;" width="18" height="16"><path d="M9.6 2 L14.6 11.6 H4.6 Z" fill="#5a5a5a"/><circle cx="5.6" cy="11.4" r="3" fill="none" stroke="#5a5a5a" stroke-width="1.3"/><path d="M3 12 Q6 14 9 11.4" fill="none" stroke="#666" stroke-width="1"/></svg>
<div style="left:0px;top:136.5px;width:189px;height:21px;background:#5a5a5a;"></div>
<div style="left:1px;top:137px;width:33px;height:20.5px;background:#484848;"></div>
<div style="left:35px;top:137.5px;width:32.5px;height:19px;background:#2e2e2e;"></div>
<div style="left:68.8px;top:137.5px;width:31.799999999999997px;height:19px;background:#2e2e2e;"></div>
<div style="left:102px;top:137.5px;width:31.599999999999994px;height:19px;background:#2e2e2e;"></div>
<div style="left:135px;top:137.5px;width:31.599999999999994px;height:19px;background:#2e2e2e;"></div>
<div style="left:168px;top:137.5px;width:21px;height:19px;background:#2e2e2e;"></div>
<svg style="left:10.5px;top:138.5px" width="17.34" height="16.32" viewBox="0 0 17 16"><path d="M3 3.6 L6.6 1.4 L10.6 3.2 V6.6 L15.8 9 V12 L9.6 15.4 L1.2 10.8 V7.6 L3 6.8 Z" fill="#e3b21e" stroke="#f6e79a" stroke-width="1.5" stroke-linejoin="round"/><path d="M3 3.6 L6.6 1.4 L10.6 3.2 L7 5.4 Z" fill="#f8dc52"/><path d="M3 3.6 L7 5.4 V8.6 L3 6.8 Z" fill="#e6b422"/><path d="M7 5.4 L10.6 3.2 V6.6 L7 8.6 Z" fill="#cfa018"/><path d="M1.2 7.6 L3 6.8 L7 8.6 L10.6 6.6 L15.8 9 L9.6 12.4 Z" fill="#f6d544"/><path d="M1.2 7.6 L9.6 12.4 V15.4 L1.2 10.8 Z" fill="#e2ad1c"/><path d="M9.6 12.4 L15.8 9 V12 L9.6 15.4 Z" fill="#c59614"/><path d="M3 3.6 L7 5.4 L10.6 3.2 M7 5.4 V8.6 M1.2 7.6 L9.6 12.4 L15.8 9 M9.6 12.4 V15.4" fill="none" stroke="#9a7410" stroke-width="0.45"/></svg>
<svg style="left:44px;top:139px;" width="16" height="16"><rect x="1" y="1.6" width="13.6" height="12.8" fill="#f4f4f4"/><rect x="1" y="1.6" width="13.6" height="2.2" fill="#2f86c6"/><rect x="2" y="5.2" width="2.6" height="2.2" fill="#2f86c6"/><rect x="2" y="8.4" width="2.6" height="2.2" fill="#2f86c6"/><rect x="2" y="11.6" width="2.6" height="2" fill="#2f86c6"/><path d="M5.8 6.3 H13.4 M5.8 9.5 H13.4 M5.8 12.6 H13.4" stroke="#333" stroke-width="1.1"/></svg>
<svg style="left:78px;top:139px;" width="14" height="16"><path d="M2.6 1 V14 M2.6 4 H6.6 M2.6 12 H8.6" fill="none" stroke="#e8e8e8" stroke-width="1.2"/><rect x="6" y="1.6" width="4.6" height="4.4" fill="#f2f2f2" stroke="#333" stroke-width="0.5"/><rect x="8" y="9.6" width="4.6" height="4.4" fill="#f2f2f2" stroke="#333" stroke-width="0.5"/></svg>
<svg style="left:109.5px;top:138px;" width="18" height="18"><circle cx="9" cy="9" r="6.2" fill="#6a6a6a" stroke="#e0e0e0" stroke-width="1.6"/><circle cx="9" cy="9" r="6.2" fill="none" stroke="#222" stroke-width="0.7"/><path d="M9 0.6 V17.4 M0.6 9 H17.4" stroke="#e0e0e0" stroke-width="2"/><path d="M9 0.6 V17.4 M0.6 9 H17.4" stroke="#222" stroke-width="0.9"/></svg>
<svg style="left:143px;top:138px;" width="18" height="18"><defs><clipPath id="cb1"><circle cx="9" cy="9" r="8"/></clipPath></defs><g clip-path="url(#cb1)"><rect x="0" y="0" width="9" height="9.6" fill="#3d7edb"/><rect x="9" y="0" width="9" height="9.6" fill="#d8301f"/><rect x="0" y="9.6" width="7" height="9" fill="#3da53a"/><rect x="7" y="9.6" width="11" height="9" fill="#f0c41c"/><ellipse cx="7" cy="5" rx="5" ry="3" fill="#fff" opacity="0.45"/><path d="M11 0 L18 7 V0 Z" fill="#111"/></g></svg>
<div style="left:158px;top:141px;width:16.5px;height:16.5px;background:#e4e4e4;border:1px solid #f8f8f8;box-sizing:border-box;"></div>
<div style="left:175px;top:141px;width:14.5px;height:16.5px;background:#e4e4e4;border:1px solid #f8f8f8;box-sizing:border-box;"></div>
<svg style="left:163px;top:145.5px;" width="6" height="8"><path d="M4.4 0.8 L1 3.8 L4.4 6.8 Z" fill="#111"/></svg>
<svg style="left:180px;top:145.5px;" width="6" height="8"><path d="M1.2 0.8 L4.6 3.8 L1.2 6.8 Z" fill="#111"/></svg>
<div style="left:3.5px;top:158px;width:183.5px;height:20.5px;background:#585858;border:1px solid #6e6e6e;box-sizing:border-box;"></div>
<svg style="left:6.5px;top:160.5px;" width="15" height="17"><path d="M0.8 2.6 Q7.2 6 14 2.6 L8.4 8.6 V15.4 L6.4 14 V8.6 Z" fill="#fafafa" stroke="#d0d0d0" stroke-width="0.5"/><ellipse cx="7.4" cy="2.4" rx="6.6" ry="1.7" fill="#2f86c6" stroke="#cfe6f5" stroke-width="0.7"/></svg>
<svg style="left:3.5px;top:181px" width="17.0" height="16.0" viewBox="0 0 17 16"><path d="M3 3.6 L6.6 1.4 L10.6 3.2 V6.6 L15.8 9 V12 L9.6 15.4 L1.2 10.8 V7.6 L3 6.8 Z" fill="#e3b21e" stroke="#f6e79a" stroke-width="1.5" stroke-linejoin="round"/><path d="M3 3.6 L6.6 1.4 L10.6 3.2 L7 5.4 Z" fill="#f8dc52"/><path d="M3 3.6 L7 5.4 V8.6 L3 6.8 Z" fill="#e6b422"/><path d="M7 5.4 L10.6 3.2 V6.6 L7 8.6 Z" fill="#cfa018"/><path d="M1.2 7.6 L3 6.8 L7 8.6 L10.6 6.6 L15.8 9 L9.6 12.4 Z" fill="#f6d544"/><path d="M1.2 7.6 L9.6 12.4 V15.4 L1.2 10.8 Z" fill="#e2ad1c"/><path d="M9.6 12.4 L15.8 9 V12 L9.6 15.4 Z" fill="#c59614"/><path d="M3 3.6 L7 5.4 L10.6 3.2 M7 5.4 V8.6 M1.2 7.6 L9.6 12.4 L15.8 9 M9.6 12.4 V15.4" fill="none" stroke="#9a7410" stroke-width="0.45"/></svg>
<svg style="left:21.5px;top:180.5px;" width="18" height="17"><path d="M1.6 5.8 L9.6 2 L17 5 L9.4 8.8 Z" fill="#2f86c0" stroke="#9fd0f0" stroke-width="0.6"/><path d="M5 7.6 V11 Q9.2 14 13.4 10.6 V7" fill="#2472a8" stroke="#1b5a88" stroke-width="0.4"/><path d="M3.2 6.6 Q2.2 10 2.6 15" fill="none" stroke="#e6e6e6" stroke-width="1.1"/></svg>
<svg style="left:7.5px;top:202.8px;" width="6" height="8.4"><path d="M0.6 0.4 L4.8 4.2 L0.6 8 Z" fill="#f4f4f4"/></svg>
<svg style="left:22px;top:198.8px;" width="16" height="16.4" viewBox="0 0 16 16.4"><path d="M1.4 2.6 H5.6 L6.6 4 H13.6 V14.4 H1.4 Z" fill="#f6f6f6" stroke="#d6d6d6" stroke-width="0.8"/><path d="M1.4 4.6 H13.6" stroke="#bdbdbd" stroke-width="0.7"/><circle cx="8" cy="9.6" r="3.2" fill="#fff" stroke="#444" stroke-width="0.9"/><path d="M8 7.8 V9.8 H9.6" fill="none" stroke="#333" stroke-width="0.8"/><path d="M3 10 Q3.4 13 6.4 13.2 L5.8 12 M3 10 L2.2 11.4 M3 10 L4.4 10.8" fill="none" stroke="#2b7fbf" stroke-width="1.2"/></svg>
<svg style="left:22px;top:217.13500000000002px;" width="16" height="16.4" viewBox="0 0 16 16.4"><path d="M1.4 2.6 H5.6 L6.6 4 H13.6 V14.4 H1.4 Z" fill="#f6f6f6" stroke="#d6d6d6" stroke-width="0.8"/><path d="M1.4 4.6 H13.6" stroke="#bdbdbd" stroke-width="0.7"/><circle cx="7.6" cy="9.6" r="3.4" fill="#fff" stroke="#333" stroke-width="1.1"/><path d="M7.4 10 L9.6 7.2" stroke="#333" stroke-width="0.9"/><path d="M9.6 12 Q11.4 10.6 11 8.2" fill="none" stroke="#e03a2a" stroke-width="1.6"/></svg>
<svg style="left:7.5px;top:239.47000000000003px;" width="6" height="8.4"><path d="M0.6 0.4 L4.8 4.2 L0.6 8 Z" fill="#f4f4f4"/></svg>
<svg style="left:22px;top:235.47000000000003px;" width="16" height="16.4" viewBox="0 0 16 16.4"><path d="M1.4 2.6 H5.6 L6.6 4 H13.6 V14.4 H1.4 Z" fill="#f6f6f6" stroke="#d6d6d6" stroke-width="0.8"/><path d="M1.4 4.6 H13.6" stroke="#bdbdbd" stroke-width="0.7"/><path d="M7.5 5.6 L11 13.2 H9.2 L8.5 11.4 H6.2 L5.5 13.2 H4 Z M7.4 8 L6.6 10.2 H8.2 Z" fill="#2b7fbf"/><path d="M3.4 13.2 H6.2 M8.6 13.2 H11.6" stroke="#2b7fbf" stroke-width="0.9"/></svg>
<svg style="left:7.5px;top:257.805px;" width="6" height="8.4"><path d="M0.6 0.4 L4.8 4.2 L0.6 8 Z" fill="#f4f4f4"/></svg>
<svg style="left:22px;top:253.805px;" width="16" height="16.4" viewBox="0 0 16 16.4"><rect x="0.6" y="1.2" width="14.8" height="14.2" rx="2" fill="none" stroke="#bdbdbd" stroke-width="0.9"/><path d="M1.4 2.6 H5.6 L6.6 4 H13.6 V14.4 H1.4 Z" fill="#f6f6f6" stroke="#d6d6d6" stroke-width="0.8"/><path d="M1.4 4.6 H13.6" stroke="#bdbdbd" stroke-width="0.7"/><path d="M5 8 L8 6.4 L11 8 V11.4 L8 13 L5 11.4 Z" fill="#1d6aa8" stroke="#0f3f6c" stroke-width="0.6"/><path d="M5 8 L8 9.6 L11 8 M8 9.6 V13" fill="none" stroke="#9fd0f0" stroke-width="0.6"/></svg>
<svg style="left:22px;top:272.14000000000004px;" width="16" height="16.4" viewBox="0 0 16 16.4"><path d="M4.6 2.4 H14 M4.6 7.2 H14 M4.6 12 H9" stroke="#e8e8e8" stroke-width="1.5" stroke-linecap="round"/><path d="M4.6 2.4 H14 M4.6 7.2 H14" stroke="#555" stroke-width="0.5"/><rect x="0.8" y="1.4" width="2" height="2" fill="#fff"/><rect x="0.8" y="6.2" width="2" height="2" fill="#4aa3df"/><rect x="0.8" y="11" width="2" height="2" fill="#f2c21c"/><circle cx="12" cy="12.4" r="2.7" fill="#2a2a2a" stroke="#eee" stroke-width="1.2"/><circle cx="12" cy="12.4" r="0.9" fill="#eee"/><path d="M12 8.6 V9.8 M12 15 V16.2 M8.2 12.4 H9.4 M14.6 12.4 H15.8 M9.4 9.8 L10.2 10.6 M13.8 14.2 L14.6 15 M9.4 15 L10.2 14.2 M13.8 10.6 L14.6 9.8" stroke="#eee" stroke-width="1"/></svg>
<svg style="left:22px;top:290.475px;" width="16" height="16.4" viewBox="0 0 16 16.4"><path d="M2.4 4 L6.4 2.6 V13.4 L2.4 14.8 Z M8 3 L12.6 1.4 V12.6 L8 14.2 Z" fill="#9a9a9a" stroke="#d2d2d2" stroke-width="0.9" stroke-linejoin="round"/><path d="M6.4 5 H8 M6.4 11 H8" stroke="#cfcfcf" stroke-width="0.9"/><path d="M3.4 4.6 V13.6 M9 3.6 V13" stroke="#6e6e6e" stroke-width="0.7"/></svg>
<svg style="left:22px;top:308.81px;" width="16" height="16.4" viewBox="0 0 16 16.4"><path d="M2.4 4 L6.4 2.6 V13.4 L2.4 14.8 Z M8 3 L12.6 1.4 V12.6 L8 14.2 Z" fill="#9a9a9a" stroke="#d2d2d2" stroke-width="0.9" stroke-linejoin="round"/><path d="M6.4 5 H8 M6.4 11 H8" stroke="#cfcfcf" stroke-width="0.9"/><path d="M3.4 4.6 V13.6 M9 3.6 V13" stroke="#6e6e6e" stroke-width="0.7"/></svg>
<svg style="left:22px;top:327.14500000000004px;" width="16" height="16.4" viewBox="0 0 16 16.4"><path d="M2.4 4 L6.4 2.6 V13.4 L2.4 14.8 Z M8 3 L12.6 1.4 V12.6 L8 14.2 Z" fill="#9a9a9a" stroke="#d2d2d2" stroke-width="0.9" stroke-linejoin="round"/><path d="M6.4 5 H8 M6.4 11 H8" stroke="#cfcfcf" stroke-width="0.9"/><path d="M3.4 4.6 V13.6 M9 3.6 V13" stroke="#6e6e6e" stroke-width="0.7"/></svg>
<svg style="left:22px;top:345.48px;" width="16" height="16.4" viewBox="0 0 16 16.4"><path d="M3.6 2 V13.2 H15" fill="none" stroke="#e6e6e6" stroke-width="2.6" stroke-linejoin="miter"/><path d="M3.6 2 V13.2 H14" fill="none" stroke="#111" stroke-width="1.2"/><path d="M3.6 0.4 L5.4 3.4 H1.8 Z M15.8 13.2 L12.4 11.2 V15.2 Z" fill="#111" stroke="#e6e6e6" stroke-width="0.5"/></svg>
<svg style="left:7.5px;top:367.815px;" width="6" height="8.4"><path d="M0.6 0.4 L4.8 4.2 L0.6 8 Z" fill="#f4f4f4"/></svg>
<svg style="left:22px;top:363.815px;" width="16" height="16.4" viewBox="0 0 16 16.4"><path d="M7.6 2.2 L11 0.8 L14.8 2.4 V13.4 L11.4 15 L7.6 13.4 Z" fill="#f4f4f4" stroke="#cfcfcf" stroke-width="0.7"/><path d="M11.2 4 V15 M7.6 2.2 L11.2 4 L14.8 2.4" fill="none" stroke="#bdbdbd" stroke-width="0.7"/><path d="M11.2 4 L14.8 2.4 V13.4 L11.2 15 Z" fill="#dedede"/><path d="M0.8 6 L4.8 4.4 L9 6 V11.6 L5 13.6 L0.8 11.6 Z" fill="#2f9bd8" stroke="#bfe2f6" stroke-width="0.8" stroke-linejoin="round"/><path d="M0.8 6 L5 7.8 L9 6 M5 7.8 V13.6" fill="none" stroke="#bfe2f6" stroke-width="0.7"/><path d="M5 7.8 L9 6 V11.6 L5 13.6 Z" fill="#1f7fbd"/></svg>
<svg style="left:22px;top:382.15000000000003px;" width="16" height="16.4" viewBox="0 0 16 16.4"><path d="M13.4 2 H5 Q2 2 2 5 V11.4 Q2 14.6 5.4 14.6 H14.4" fill="none" stroke="#9a9a9a" stroke-width="2.6" stroke-linecap="round"/><path d="M13.4 2 H5 Q2 2 2 5 V11.4 Q2 14.6 5.4 14.6 H14.4" fill="none" stroke="#565656" stroke-width="0.9"/></svg>
<svg style="left:7.5px;top:404.485px;" width="6" height="8.4"><path d="M0.6 0.4 L4.8 4.2 L0.6 8 Z" fill="#f4f4f4"/></svg>
<svg style="left:22px;top:400.485px;" width="16" height="16.4" viewBox="0 0 16 16.4"><path d="M3 3.2 L5.6 1.6 H12.6 V12.4 L10 14.6 H3 Z" fill="#f4f4f4" stroke="#cfcfcf" stroke-width="0.8" stroke-linejoin="round"/><path d="M3 3.2 H10 L12.6 1.6 M10 3.2 V14.6" fill="none" stroke="#b5b5b5" stroke-width="0.7"/><rect x="4.4" y="5" width="4.4" height="7.4" fill="#5a5a5a" stroke="#333" stroke-width="0.6"/><path d="M6.4 5.4 V10.6 H8.6 V5.4" fill="#3b9bd6" stroke="#1b6aa6" stroke-width="0.5"/></svg>
<svg style="left:7.5px;top:422.82px;" width="6" height="8.4"><path d="M0.6 0.4 L4.8 4.2 L0.6 8 Z" fill="#f4f4f4"/></svg>
<svg style="left:22px;top:418.82px;" width="16" height="16.4" viewBox="0 0 16 16.4"><path d="M7.6 2.2 L11 0.8 L14.8 2.4 V13.4 L11.4 15 L7.6 13.4 Z" fill="#f4f4f4" stroke="#cfcfcf" stroke-width="0.7"/><path d="M11.2 4 V15 M7.6 2.2 L11.2 4 L14.8 2.4" fill="none" stroke="#bdbdbd" stroke-width="0.7"/><path d="M11.2 4 L14.8 2.4 V13.4 L11.2 15 Z" fill="#dedede"/><path d="M0.8 6 L4.8 4.4 L9 6 V11.6 L5 13.6 L0.8 11.6 Z" fill="#2f9bd8" stroke="#bfe2f6" stroke-width="0.8" stroke-linejoin="round"/><path d="M0.8 6 L5 7.8 L9 6 M5 7.8 V13.6" fill="none" stroke="#bfe2f6" stroke-width="0.7"/><path d="M5 7.8 L9 6 V11.6 L5 13.6 Z" fill="#1f7fbd"/></svg>
<svg style="left:7.5px;top:441.15500000000003px;" width="6" height="8.4"><path d="M0.6 0.4 L4.8 4.2 L0.6 8 Z" fill="#f4f4f4"/></svg>
<svg style="left:22px;top:437.15500000000003px;" width="16" height="16.4" viewBox="0 0 16 16.4"><path d="M7.6 2.2 L11 0.8 L14.8 2.4 V13.4 L11.4 15 L7.6 13.4 Z" fill="#f4f4f4" stroke="#cfcfcf" stroke-width="0.7"/><path d="M11.2 4 V15 M7.6 2.2 L11.2 4 L14.8 2.4" fill="none" stroke="#bdbdbd" stroke-width="0.7"/><path d="M11.2 4 L14.8 2.4 V13.4 L11.2 15 Z" fill="#dedede"/><path d="M0.8 6 L4.8 4.4 L9 6 V11.6 L5 13.6 L0.8 11.6 Z" fill="#2f9bd8" stroke="#bfe2f6" stroke-width="0.8" stroke-linejoin="round"/><path d="M0.8 6 L5 7.8 L9 6 M5 7.8 V13.6" fill="none" stroke="#bfe2f6" stroke-width="0.7"/><path d="M5 7.8 L9 6 V11.6 L5 13.6 Z" fill="#1f7fbd"/></svg>
<svg style="left:7.5px;top:459.49px;" width="6" height="8.4"><path d="M0.6 0.4 L4.8 4.2 L0.6 8 Z" fill="#f4f4f4"/></svg>
<svg style="left:22px;top:455.49px;" width="16" height="16.4" viewBox="0 0 16 16.4"><path d="M3 3.2 L5.6 1.6 H12.6 V12.4 L10 14.6 H3 Z" fill="#f4f4f4" stroke="#cfcfcf" stroke-width="0.8" stroke-linejoin="round"/><path d="M3 3.2 H10 L12.6 1.6 M10 3.2 V14.6" fill="none" stroke="#b5b5b5" stroke-width="0.7"/><rect x="4.4" y="5" width="4.4" height="7.4" fill="#5a5a5a" stroke="#333" stroke-width="0.6"/><path d="M6.4 5.4 V10.6 H8.6 V5.4" fill="#3b9bd6" stroke="#1b6aa6" stroke-width="0.5"/></svg>
<svg style="left:22px;top:473.82500000000005px;" width="16" height="16.4" viewBox="0 0 16 16.4"><path d="M1.6 5.4 L6.4 1.2 L13.4 3 V11 L8.4 14.8 L1.6 12.6 Z" fill="#f6f6f6" stroke="#d0d0d0" stroke-width="0.8" stroke-linejoin="round"/><path d="M1.6 5.4 L6.4 1.2 L13.4 3 L8.6 7.2 Z" fill="#3b9bd6" stroke="#bfe2f6" stroke-width="0.7"/><path d="M8.6 7.2 V14.8" stroke="#b5b5b5" stroke-width="0.7"/><path d="M8.6 7.2 L13.4 3 V11 L8.4 14.8 Z" fill="#e0e0e0"/></svg>
<svg style="left:7.5px;top:496.16px;" width="6" height="8.4"><path d="M0.6 0.4 L4.8 4.2 L0.6 8 Z" fill="#f4f4f4"/></svg>
<svg style="left:22px;top:492.16px;" width="16" height="16.4" viewBox="0 0 16 16.4"><path d="M7.6 2.2 L11 0.8 L14.8 2.4 V13.4 L11.4 15 L7.6 13.4 Z" fill="#f4f4f4" stroke="#cfcfcf" stroke-width="0.7"/><path d="M11.2 4 V15 M7.6 2.2 L11.2 4 L14.8 2.4" fill="none" stroke="#bdbdbd" stroke-width="0.7"/><path d="M11.2 4 L14.8 2.4 V13.4 L11.2 15 Z" fill="#dedede"/><path d="M0.8 6 L4.8 4.4 L9 6 V11.6 L5 13.6 L0.8 11.6 Z" fill="#2f9bd8" stroke="#bfe2f6" stroke-width="0.8" stroke-linejoin="round"/><path d="M0.8 6 L5 7.8 L9 6 M5 7.8 V13.6" fill="none" stroke="#bfe2f6" stroke-width="0.7"/><path d="M5 7.8 L9 6 V11.6 L5 13.6 Z" fill="#1f7fbd"/></svg>
<svg style="left:7.5px;top:514.4949999999999px;" width="6" height="8.4"><path d="M0.6 0.4 L4.8 4.2 L0.6 8 Z" fill="#f4f4f4"/></svg>
<svg style="left:22px;top:510.49499999999995px;" width="16" height="16.4" viewBox="0 0 16 16.4"><path d="M3 3.2 L5.6 1.6 H12.6 V12.4 L10 14.6 H3 Z" fill="#f4f4f4" stroke="#cfcfcf" stroke-width="0.8" stroke-linejoin="round"/><path d="M3 3.2 H10 L12.6 1.6 M10 3.2 V14.6" fill="none" stroke="#b5b5b5" stroke-width="0.7"/><rect x="4.4" y="5" width="4.4" height="7.4" fill="#5a5a5a" stroke="#333" stroke-width="0.6"/><path d="M6.4 5.4 V10.6 H8.6 V5.4" fill="#3b9bd6" stroke="#1b6aa6" stroke-width="0.5"/></svg>
<svg style="left:7.5px;top:532.8299999999999px;" width="6" height="8.4"><path d="M0.6 0.4 L4.8 4.2 L0.6 8 Z" fill="#f4f4f4"/></svg>
<svg style="left:22px;top:528.8299999999999px;" width="16" height="16.4" viewBox="0 0 16 16.4"><path d="M3 3.2 L5.6 1.6 H12.6 V12.4 L10 14.6 H3 Z" fill="#f4f4f4" stroke="#cfcfcf" stroke-width="0.8" stroke-linejoin="round"/><path d="M3 3.2 H10 L12.6 1.6 M10 3.2 V14.6" fill="none" stroke="#b5b5b5" stroke-width="0.7"/><rect x="4.4" y="5" width="4.4" height="7.4" fill="#5a5a5a" stroke="#333" stroke-width="0.6"/><path d="M6.4 5.4 V10.6 H8.6 V5.4" fill="#3b9bd6" stroke="#1b6aa6" stroke-width="0.5"/></svg>
<svg style="left:22px;top:547.165px;" width="16" height="16.4" viewBox="0 0 16 16.4"><path d="M1.6 5.4 L6.4 1.2 L13.4 3 V11 L8.4 14.8 L1.6 12.6 Z" fill="#f6f6f6" stroke="#d0d0d0" stroke-width="0.8" stroke-linejoin="round"/><path d="M1.6 5.4 L6.4 1.2 L13.4 3 L8.6 7.2 Z" fill="#3b9bd6" stroke="#bfe2f6" stroke-width="0.7"/><path d="M8.6 7.2 V14.8" stroke="#b5b5b5" stroke-width="0.7"/><path d="M8.6 7.2 L13.4 3 V11 L8.4 14.8 Z" fill="#e0e0e0"/></svg>
<svg style="left:22px;top:565.5px;" width="16" height="16.4" viewBox="0 0 16 16.4"><path d="M1.6 3.4 L6.6 1.4 L13.6 3.6 V10.6 L8.4 14.6 L1.6 12.2 Z" fill="#f6f6f6" stroke="#d0d0d0" stroke-width="0.8" stroke-linejoin="round"/><path d="M6.6 1.4 L13.6 3.6 Q13.8 6 12.6 7.6 L5.8 5 Q6.8 3.6 6.6 1.4 Z" fill="#3b9bd6" stroke="#bfe2f6" stroke-width="0.7"/><path d="M1.6 3.4 L8.4 6.2 V14.6" fill="none" stroke="#c4c4c4" stroke-width="0.7"/></svg>
<svg style="left:7.5px;top:587.835px;" width="6" height="8.4"><path d="M0.6 0.4 L4.8 4.2 L0.6 8 Z" fill="#f4f4f4"/></svg>
<svg style="left:22px;top:583.835px;" width="16" height="16.4" viewBox="0 0 16 16.4"><path d="M3 3.2 L5.6 1.6 H12.6 V12.4 L10 14.6 H3 Z" fill="#f4f4f4" stroke="#cfcfcf" stroke-width="0.8" stroke-linejoin="round"/><path d="M3 3.2 H10 L12.6 1.6 M10 3.2 V14.6" fill="none" stroke="#b5b5b5" stroke-width="0.7"/><rect x="4.4" y="5" width="4.4" height="7.4" fill="#5a5a5a" stroke="#333" stroke-width="0.6"/><path d="M6.4 5.4 V10.6 H8.6 V5.4" fill="#3b9bd6" stroke="#1b6aa6" stroke-width="0.5"/></svg>
<svg style="left:22px;top:602.17px;" width="16" height="16.4" viewBox="0 0 16 16.4"><path d="M1.6 5.4 L6.4 1.2 L13.4 3 V11 L8.4 14.8 L1.6 12.6 Z" fill="#f6f6f6" stroke="#d0d0d0" stroke-width="0.8" stroke-linejoin="round"/><path d="M1.6 5.4 L6.4 1.2 L13.4 3 L8.6 7.2 Z" fill="#3b9bd6" stroke="#bfe2f6" stroke-width="0.7"/><path d="M8.6 7.2 V14.8" stroke="#b5b5b5" stroke-width="0.7"/><path d="M8.6 7.2 L13.4 3 V11 L8.4 14.8 Z" fill="#e0e0e0"/></svg>
<svg style="left:22px;top:620.505px;" width="16" height="16.4" viewBox="0 0 16 16.4"><path d="M1.6 5.4 L6.4 1.2 L13.4 3 V11 L8.4 14.8 L1.6 12.6 Z" fill="#f6f6f6" stroke="#d0d0d0" stroke-width="0.8" stroke-linejoin="round"/><path d="M1.6 5.4 L6.4 1.2 L13.4 3 L8.6 7.2 Z" fill="#3b9bd6" stroke="#bfe2f6" stroke-width="0.7"/><path d="M8.6 7.2 V14.8" stroke="#b5b5b5" stroke-width="0.7"/><path d="M8.6 7.2 L13.4 3 V11 L8.4 14.8 Z" fill="#e0e0e0"/></svg>
<div style="left:1px;top:637px;width:188.5px;height:2px;background:#2f8fd6;"></div>
<svg style="left:748px;top:119px;" width="18" height="18"><path d="M2 16 L7.2 10.8" stroke="#4f8fbd" stroke-width="3.6" stroke-linecap="round"/><path d="M2 16 L7.2 10.8" stroke="#93c4e4" stroke-width="2" stroke-linecap="round"/><circle cx="11" cy="7" r="5.3" fill="#fdfdfd" stroke="#9a9a9a" stroke-width="1.3"/><path d="M11 3.4 L12 4.8 H10 Z M11 10.6 L12 9.2 H10 Z M7.4 7 L8.8 6 V8 Z M14.6 7 L13.2 6 V8 Z" fill="#555"/></svg>
<svg style="left:769px;top:119px;" width="18" height="18"><rect x="5.6" y="1.2" width="11" height="10.6" fill="none" stroke="#555" stroke-width="1" stroke-dasharray="2.2 1.4"/><path d="M2 16 L7.2 10.8" stroke="#4f8fbd" stroke-width="3.6" stroke-linecap="round"/><path d="M2 16 L7.2 10.8" stroke="#93c4e4" stroke-width="2" stroke-linecap="round"/><circle cx="10.2" cy="7.2" r="4.9" fill="#fdfdfd" stroke="#a2a2a2" stroke-width="1.3"/></svg>
<svg style="left:791px;top:119px;" width="18" height="18"><path d="M1.6 11.4 L11 3.2 L12.6 1.6 L15.4 4 L14 5.8 L6.6 16 Q2.4 16.6 1.6 11.4 Z" fill="#e9e9e9" stroke="#8c8c8c" stroke-width="0.9" stroke-linejoin="round"/><path d="M9.4 4.6 L13 7.4 M11 3.2 L14 5.8" stroke="#8c8c8c" stroke-width="0.8"/><path d="M1.6 11.4 Q5.4 11.6 6.6 16" fill="none" stroke="#777" stroke-width="1"/><path d="M2.4 12.6 Q4.8 13.2 5.6 15.6 Q3 15.8 2.4 12.6 Z" fill="#bdbdbd"/><path d="M17 13.6 H10.6 M13 11 L10.2 13.6 L13 16.2" fill="none" stroke="#3f8cc6" stroke-width="1.7"/></svg>
<svg style="left:813px;top:119.5px;" width="17" height="17"><path d="M1.2 6 Q1.4 2.2 8.4 2.2 Q15.4 2.2 15.6 6 V13.4 Q12 15.6 10.6 15.2 V8 Q8.4 6.6 6 8 V15.2 Q3 15.4 1.2 13.6 Z" fill="#dedede" stroke="#6e6e6e" stroke-width="0.8" stroke-linejoin="round"/><path d="M1.2 6 Q3.4 8.4 6 8 Q8.4 6.6 10.6 8 Q13.4 8.4 15.6 6" fill="none" stroke="#7a7a7a" stroke-width="0.7"/><path d="M1.2 6.2 Q3.4 8.4 6 8 V15.2 Q3 15.4 1.2 13.6 Z M10.6 8 Q13.4 8.4 15.6 6.2 V13.4 Q12.6 15.6 10.6 15.2 Z" fill="#4a94cc" stroke="#2a6ea8" stroke-width="0.6"/><path d="M2 8.6 L5.4 9.4 M2 10.6 L5.4 11.4 M2 12.6 L5.4 13.4 M11.2 9.4 L15 8.4 M11.2 11.4 L15 10.4 M11.2 13.4 L15 12.4" stroke="#bfe0f5" stroke-width="0.8" stroke-dasharray="0.9 0.7"/></svg>
<svg style="left:834px;top:119px;" width="18" height="18"><path d="M1.6 11.4 L11 3.2 L12.6 1.6 L15.4 4 L14 5.8 L6.6 16 Q2.4 16.6 1.6 11.4 Z" fill="#e9e9e9" stroke="#8c8c8c" stroke-width="0.9" stroke-linejoin="round"/><path d="M9.4 4.6 L13 7.4 M11 3.2 L14 5.8" stroke="#8c8c8c" stroke-width="0.8"/><path d="M1.6 11.4 Q5.4 11.6 6.6 16" fill="none" stroke="#777" stroke-width="1"/><path d="M2.4 12.6 Q4.8 13.2 5.6 15.6 Q3 15.8 2.4 12.6 Z" fill="#bdbdbd"/><path d="M7.4 0.6 L12 1.2 L9 4.4 L11 4.8 L3.8 9.8 L6.4 5.8 L4.2 5.4 Z" fill="#f6c02a" stroke="#d2641c" stroke-width="0.8" stroke-linejoin="round"/><text x="13.6" y="17" text-anchor="middle" font-family="Liberation Serif" font-weight="bold" font-size="10.5" fill="#3a80bc">A</text></svg>
<svg style="left:856px;top:119px;" width="18" height="18"><path d="M5.6 2 H16 V12 H5.6 Z" fill="#f6f6f6" stroke="#777" stroke-width="0.8"/><path d="M1.6 6 L5.6 2 M12 6 L16 2 M12 16 L16 12" stroke="#777" stroke-width="0.8"/><rect x="1.6" y="6" width="10.4" height="10" fill="#6fb2e0" stroke="#2b6fa6" stroke-width="0.9"/><path d="M9 4 H13 M11 2.8 V5.2 M13.8 7 V11 M12.8 9 H15" stroke="#444" stroke-width="0.8"/></svg>
<svg style="left:878.7px;top:126.6px;" width="4.6" height="2.8"><path d="M0 0H4.6L2.3 2.8Z" fill="#8a8a8a"/></svg>
<svg style="left:890px;top:119px;" width="18" height="18"><path d="M2.4 4.2 L8 2 L15.4 3.4 V13.6 L8.4 16.4 L2.4 13.8 Z" fill="#f4f4f4" stroke="#888" stroke-width="0.8" stroke-linejoin="round"/><path d="M2.4 4.2 L8.4 6 V16.4 L2.4 13.8 Z" fill="#74b4de" stroke="#3c7fb4" stroke-width="0.7"/><path d="M2.4 4.2 L8 2 L15.4 3.4 L8.4 6 Z" fill="#bcdcf2" stroke="#6a9cc4" stroke-width="0.6"/><path d="M8.4 6 L15.4 3.4 V13.6 L8.4 16.4 Z" fill="#ffffff" stroke="#888" stroke-width="0.6"/></svg>
<svg style="left:911.7px;top:126.6px;" width="4.6" height="2.8"><path d="M0 0H4.6L2.3 2.8Z" fill="#8a8a8a"/></svg>
<svg style="left:923px;top:120px;" width="18" height="16"><path d="M1 8 Q9 0.6 17 8 Q9 15 1 8 Z" fill="#f4f4f4" stroke="#a8a8a8" stroke-width="1.1"/><ellipse cx="8.4" cy="8" rx="3" ry="4.4" fill="#6c6c6c"/><path d="M8.4 8 V15.4" stroke="#777" stroke-width="1.1"/><circle cx="7.6" cy="6.4" r="1" fill="#ddd"/></svg>
<svg style="left:945.7px;top:126.6px;" width="4.6" height="2.8"><path d="M0 0H4.6L2.3 2.8Z" fill="#8a8a8a"/></svg>
<svg style="left:956px;top:118.5px;" width="19" height="19"><defs><clipPath id="cb2"><circle cx="8.2" cy="8.6" r="7.4"/></clipPath></defs><g clip-path="url(#cb2)"><rect x="0" y="0" width="8" height="8.6" fill="#3f86dc"/><rect x="8" y="0" width="9" height="8.6" fill="#d9382a"/><rect x="0" y="8.6" width="17" height="9" fill="#45a843"/><path d="M8 8.6 L17 8.6 L17 2 Z" fill="#d9382a"/><ellipse cx="6.4" cy="5" rx="4.6" ry="2.8" fill="#fff" opacity="0.4"/></g><circle cx="8.2" cy="8.6" r="7.4" fill="none" stroke="#7a7a7a" stroke-width="0.5"/><path d="M8.6 15.2 L9.6 11.8 L15.4 6.6 L17.8 9 L12 14.4 Z" fill="#f1c232" stroke="#6b4a12" stroke-width="0.8" stroke-linejoin="round"/><path d="M8.6 15.2 L9.6 11.8 L12 14.4 Z" fill="#e8d2a8" stroke="#6b4a12" stroke-width="0.6"/></svg>
<svg style="left:977px;top:118.5px;" width="19" height="19"><defs><clipPath id="cb3"><circle cx="9" cy="8" r="6.8"/></clipPath></defs><rect x="1" y="10" width="16.4" height="7.6" fill="#222"/><path d="M1 10 H5 V13.8 H1 Z M9.2 10 H13.4 V13.8 H9.2 Z M5 13.8 H9.2 V17.6 H5 Z M13.4 13.8 H17.4 V17.6 H13.4 Z" fill="#e8e8e8"/><g clip-path="url(#cb3)"><rect x="0" y="0" width="8" height="8.6" fill="#3f86dc"/><rect x="8" y="0" width="9" height="8.6" fill="#d9382a"/><rect x="0" y="8.6" width="16" height="9" fill="#45a843"/><path d="M8 8.6 L16 8.6 L16 2 Z" fill="#d9382a"/><ellipse cx="6.4" cy="5" rx="4.6" ry="2.8" fill="#fff" opacity="0.4"/></g><path d="M11.6 10.4 L15.2 12.6 L12.6 14.6 Z" fill="#f1c232"/></svg>
<svg style="left:1000.7px;top:126.6px;" width="4.6" height="2.8"><path d="M0 0H4.6L2.3 2.8Z" fill="#8a8a8a"/></svg>
<svg style="left:1011px;top:120px;" width="18" height="16"><rect x="1" y="1" width="15.6" height="10.6" fill="#f4f4f4" stroke="#6c6c6c" stroke-width="1.4"/><rect x="2.6" y="2.6" width="12.4" height="7.4" fill="#dcdcdc"/><path d="M8.8 11.6 V14 M5.4 14.4 H12.2" stroke="#555" stroke-width="1.4"/></svg>
<svg style="left:1033.7px;top:126.6px;" width="4.6" height="2.8"><path d="M0 0H4.6L2.3 2.8Z" fill="#8a8a8a"/></svg>
<svg style="left:1491px;top:103px;" width="13" height="14"><rect x="1" y="1.2" width="10.6" height="11.4" fill="none" stroke="#9c9c9c" stroke-width="1"/><path d="M3.4 1.2 V12.6" stroke="#9c9c9c" stroke-width="0.8"/><path d="M6.6 4.6 L4.2 7 L6.6 9.4 Z" fill="#9c9c9c"/></svg>
<svg style="left:1513px;top:103px;" width="13" height="14"><rect x="1" y="1.2" width="10.6" height="11.4" fill="none" stroke="#9c9c9c" stroke-width="1"/><path d="M9.2 1.2 V12.6" stroke="#9c9c9c" stroke-width="0.8"/><path d="M6.2 4.6 L8.6 7 L6.2 9.4 Z" fill="#9c9c9c"/></svg>
<div style="left:1537px;top:113px;width:8.5px;height:1.4px;background:#9c9c9c;"></div>
<svg style="left:1555px;top:103px;" width="15" height="14"><path d="M4.6 4.6 V1.4 H13.6 V9 H10.2" fill="none" stroke="#9c9c9c" stroke-width="1.1"/><rect x="1.4" y="5" width="8.6" height="7.6" fill="none" stroke="#9c9c9c" stroke-width="1.1"/></svg>
<svg style="left:1579px;top:104px;" width="12" height="12"><path d="M1.4 1.4 L10 10.4 M10 1.4 L1.4 10.4" stroke="#9c9c9c" stroke-width="1.1"/></svg>
<div style="left:1578.5px;top:139px;width:21.5px;height:140px;background:#6a6a6a;"></div>
<div style="left:1579.5px;top:139.5px;width:20.5px;height:19px;background:#a2a2a2;"></div>
<div style="left:1579.5px;top:159.8px;width:20.5px;height:19px;background:#2e2e2e;"></div>
<div style="left:1579.5px;top:179.70000000000002px;width:20.5px;height:19px;background:#2e2e2e;"></div>
<div style="left:1579.5px;top:199.6px;width:20.5px;height:19px;background:#2e2e2e;"></div>
<div style="left:1579.5px;top:219.5px;width:20.5px;height:19px;background:#2e2e2e;"></div>
<div style="left:1579.5px;top:239.4px;width:20.5px;height:19px;background:#2e2e2e;"></div>
<div style="left:1579.5px;top:259.29999999999995px;width:20.5px;height:19px;background:#2e2e2e;"></div>
<svg style="left:1580px;top:140px;" width="19" height="18"><defs><radialGradient id="gl" cx="0.4" cy="0.35" r="0.7"><stop offset="0" stop-color="#5aa0d0"/><stop offset="0.6" stop-color="#1d5f94"/><stop offset="1" stop-color="#0d3a64"/></radialGradient></defs><circle cx="9.4" cy="9" r="8" fill="url(#gl)" stroke="#0d3a64" stroke-width="0.5"/><path d="M7.6 6.4 L12 9 L7.6 11.6 Z" fill="none" stroke="#cfe6f5" stroke-width="0.9"/><path d="M3.4 9.6 Q5 5 9.4 4.4 M13 13.4 Q11 15 8.6 14.6" fill="none" stroke="#9fd0f0" stroke-width="0.8"/></svg>
<svg style="left:1581px;top:160.5px;" width="17" height="17"><path d="M1.4 8.6 L8.6 1.8 L15.8 8.6" fill="none" stroke="#2f7fc2" stroke-width="2"/><path d="M3.6 8.4 L8.6 3.8 L13.6 8.4 V15.4 H3.6 Z" fill="#fff"/><rect x="7" y="10" width="3.2" height="5.4" fill="#333"/><rect x="8" y="10.8" width="1.4" height="1.8" fill="#fff"/></svg>
<svg style="left:1581px;top:180.5px;" width="17" height="17"><path d="M2 5 L5 3.4 L7 4.4 L10 2.6 L12 3.8 L14.4 2.8 V13 L11.6 15.6 L9.4 14.6 L7 16.2 L4.6 15 L2 14.6 Z" fill="#ededed" stroke="#fff" stroke-width="0.6"/><path d="M5 3.6 V15 M7 4.4 V16 M10 2.8 V14.6 M12 3.8 V15.2" stroke="#555" stroke-width="0.9"/></svg>
<svg style="left:1581px;top:200.5px;" width="17" height="17"><path d="M1.4 3.6 H6 L7 5 H13 V7 H1.4 Z" fill="#d8d8d8"/><path d="M3.6 7 H16 L13.4 14.6 H1.2 Z" fill="#f4f4f4" stroke="#bbb" stroke-width="0.5"/><path d="M1.4 5 V14.4" stroke="#d8d8d8" stroke-width="1"/></svg>
<svg style="left:1580px;top:220px;" width="19" height="18"><rect x="1.2" y="1.2" width="16.4" height="15" rx="2.4" fill="#3a3a3a" stroke="#cfcfcf" stroke-width="1.1"/><path d="M3.6 4.4 H10.6 V6.6 H8.4 V10.4 H11.4 V12.8 H3 V10.4 H6 V6.6 H3.6 Z" fill="#f2c632" stroke="#fff2b0" stroke-width="0.5"/><rect x="12.6" y="4" width="3" height="3" fill="#f2c632"/><rect x="13.2" y="8.6" width="2" height="5" fill="#e8e8e8"/></svg>
<svg style="left:1581px;top:240.5px;" width="17" height="17"><defs><clipPath id="cb4"><circle cx="8.4" cy="8.4" r="7.2"/></clipPath></defs><g clip-path="url(#cb4)"><rect x="0" y="0" width="8.4" height="8.8" fill="#3f7fdc"/><rect x="8.4" y="0" width="9" height="8.8" fill="#d9382a"/><rect x="0" y="8.8" width="8" height="9" fill="#45a843"/><rect x="8" y="8.8" width="9" height="9" fill="#f0c41c"/><ellipse cx="6.4" cy="5" rx="4.4" ry="2.6" fill="#fff" opacity="0.45"/></g></svg>
<svg style="left:1581px;top:260.5px;" width="17" height="17"><rect x="1" y="1" width="15" height="14.6" fill="#f6f6f6"/><rect x="1" y="1" width="15" height="2.4" fill="#2f86c6"/><rect x="2" y="5" width="3" height="2.4" fill="#2f86c6"/><rect x="2" y="8.6" width="3" height="2.4" fill="#2f86c6"/><rect x="2" y="12.2" width="3" height="2.4" fill="#2f86c6"/><path d="M6.4 6.2 H14.6 M6.4 9.8 H14.6 M6.4 13.4 H14.6" stroke="#333" stroke-width="1.2"/></svg>
<svg style="left:215px;top:750px;" width="40" height="50"><defs><linearGradient id="gy" x1="0" x2="1"><stop offset="0" stop-color="#3fb452"/><stop offset="0.5" stop-color="#86dc94"/><stop offset="1" stop-color="#3fb452"/></linearGradient></defs><rect x="8.1" y="22" width="3.7" height="18" fill="url(#gy)"/><path d="M10 15.6 L13.7 22.6 Q10 24 6.4 22.6 Z" fill="#2f9e43"/><path d="M10 16.8 L11.6 21.4 Q10 22 8.6 21.4 Z" fill="#6fcf80"/><path d="M15.4 38.3 L22 35.7 L27 38.7" fill="none" stroke="#e8281e" stroke-width="1.4" stroke-linejoin="round"/><path d="M9 38.4 H20 V36.4 L27.8 40.4 L20 44.6 V41.8 H9 Z" fill="#10109c"/><path d="M10 39.2 H19" stroke="#3a3ad8" stroke-width="0.9"/><path d="M21.4 38.6 L25.4 40.4" stroke="#3a3ad8" stroke-width="0.9"/></svg>
<svg style="left:640px;top:190px;" width="500" height="550" viewBox="640 190 500 550"><defs><linearGradient id="gFil" gradientUnits="userSpaceOnUse" x1="780" y1="247.6" x2="777.5" y2="276.6"><stop offset="0" stop-color="#212121"/><stop offset="0.22" stop-color="#2b2b2b"/><stop offset="0.45" stop-color="#474747"/><stop offset="0.6" stop-color="#5c5c5c"/><stop offset="0.75" stop-color="#454545"/><stop offset="0.92" stop-color="#303030"/><stop offset="1" stop-color="#2b2b2b"/></linearGradient><linearGradient id="gBot" gradientUnits="userSpaceOnUse" x1="760" y1="612" x2="758" y2="634"><stop offset="0" stop-color="#2b2b2b"/><stop offset="0.5" stop-color="#242424"/><stop offset="1" stop-color="#1b1b1b"/></linearGradient><linearGradient id="gBossB" gradientUnits="userSpaceOnUse" x1="962" y1="544" x2="958" y2="583"><stop offset="0" stop-color="#2c2c2c"/><stop offset="0.2" stop-color="#4a4a4a"/><stop offset="0.32" stop-color="#525252"/><stop offset="0.55" stop-color="#333"/><stop offset="1" stop-color="#202020"/></linearGradient><linearGradient id="gBossT" gradientUnits="userSpaceOnUse" x1="960" y1="268" x2="957" y2="290"><stop offset="0" stop-color="#2d2d2d"/><stop offset="0.6" stop-color="#262626"/><stop offset="1" stop-color="#1c1c1c"/></linearGradient><linearGradient id="gHoleB" gradientUnits="userSpaceOnUse" x1="980" y1="555" x2="989" y2="580"><stop offset="0" stop-color="#141414"/><stop offset="0.45" stop-color="#262626"/><stop offset="0.7" stop-color="#6a6a6a"/><stop offset="0.8" stop-color="#8e8e8e"/><stop offset="0.9" stop-color="#555"/><stop offset="1" stop-color="#2a2a2a"/></linearGradient><linearGradient id="gHoleT" gradientUnits="userSpaceOnUse" x1="976" y1="266" x2="993" y2="280"><stop offset="0" stop-color="#505050"/><stop offset="0.3" stop-color="#969696"/><stop offset="0.5" stop-color="#747474"/><stop offset="0.75" stop-color="#363636"/><stop offset="1" stop-color="#1c1c1c"/></linearGradient><linearGradient id="gTabHole" gradientUnits="userSpaceOnUse" x1="770" y1="642" x2="779" y2="682"><stop offset="0" stop-color="#161616"/><stop offset="0.5" stop-color="#1f1f1f"/><stop offset="0.68" stop-color="#5a5a5a"/><stop offset="0.76" stop-color="#8a8a8a"/><stop offset="0.86" stop-color="#444"/><stop offset="1" stop-color="#1f1f1f"/></linearGradient><linearGradient id="gTabSide" gradientUnits="userSpaceOnUse" x1="736" y1="630" x2="736" y2="698"><stop offset="0" stop-color="#1f1f1f"/><stop offset="0.28" stop-color="#2a2a2a"/><stop offset="0.62" stop-color="#2a2a2a"/><stop offset="0.7" stop-color="#252525"/><stop offset="1" stop-color="#1a1a1a"/></linearGradient><linearGradient id="gCham" gradientUnits="userSpaceOnUse" x1="960" y1="606" x2="961" y2="614"><stop offset="0" stop-color="#242424"/><stop offset="1" stop-color="#333"/></linearGradient><filter id="fSh" x="-5%" y="-30%" width="110%" height="160%"><feGaussianBlur stdDeviation="1.6"/></filter><clipPath id="cOpen"><path d="M845.6 272 Q845.6 270.6 847 270.5 L1097 248.1 Q1098.4 248 1098.4 249.4 L1097.9 601 Q1097.9 602.4 1096.4 602.5 L847 626.2 Q845.6 626.3 845.6 625 Z"/></clipPath><clipPath id="cH1"><ellipse cx="774" cy="661.2" rx="14" ry="20"/></clipPath><clipPath id="cH2"><ellipse cx="899" cy="651" rx="14" ry="20"/></clipPath></defs><path d="M672 703.4 L744 698.5 L760 700 L905 686.5 L938 680.4 L1118 693.6 L838 717.2 Z" fill="#6f6f6f" filter="url(#fSh)"/><path d="M716 629.2 Q725.8 631 726.2 643 L726.2 680 Q727 694 741 697.6 L762 700 L762 640 L740 630 Z" fill="url(#gTabSide)" stroke="#0b0b0b" stroke-width="1"/><path d="M726.4 650.2 L746 651.8 M726.4 675.2 L746 676.8" stroke="#0b0b0b" stroke-width="1" fill="none"/><path d="M737 631 Q746 633 746.4 643.5 L746.4 677 Q747.5 695 762 699.4 Q766 700 770 699.2 L905 686 Q922.5 682.5 923.6 664 L923.6 630 L851 636 Z" fill="#1d1d1d" stroke="#0b0b0b" stroke-width="1"/><path d="M735.5 631.4 Q744.2 633.6 744.4 643.5 L744.4 678 Q745.4 694.6 758 698.8" fill="none" stroke="#0b0b0b" stroke-width="0.9"/><ellipse cx="774" cy="661.2" rx="14" ry="20" fill="url(#gTabHole)"/><g transform="translate(125 -10.2)"><ellipse cx="774" cy="661.2" rx="14" ry="20" fill="url(#gTabHole)"/></g><g clip-path="url(#cH1)"><ellipse cx="753.6" cy="659.4" rx="14" ry="20" fill="#fdfdfd"/><ellipse cx="753.6" cy="659.4" rx="14" ry="20" fill="none" stroke="#222" stroke-width="0.8"/></g><g clip-path="url(#cH2)"><ellipse cx="879" cy="649.2" rx="14" ry="20" fill="#fdfdfd"/><ellipse cx="879" cy="649.2" rx="14" ry="20" fill="none" stroke="#222" stroke-width="0.8"/></g><ellipse cx="774" cy="661.2" rx="14" ry="20" fill="none" stroke="#0b0b0b" stroke-width="1"/><ellipse cx="899" cy="651" rx="14" ry="20" fill="none" stroke="#0b0b0b" stroke-width="1"/><path d="M677.8 266 Q678.4 243.5 696 240 L933.8 217.6 L1094 231.9 Q1109.4 233.4 1109.5 249 L1109.5 594 Q1109.6 616.5 1092.5 619.4 L851 641 L694.5 627.2 Q678.6 624.8 677.8 606 Z" fill="#2a2a2a"/><path d="M696 240 L933.8 217.6 L1094 231.9 L1089 232.6 L851 254.4 L712.5 241.9 Z" fill="#2d2d2d"/><path d="M677.8 267.2 Q678.4 243.5 696 240 L712.5 241.9 L851 254.4 Q835.2 257.6 834.4 281 Z" fill="url(#gFil)"/><path d="M677.8 604.4 L834.4 619.3 Q835.4 637.6 851 641 L694.5 627.2 Q678.6 624.8 677.8 606 Z" fill="url(#gBot)"/><g fill="none" stroke="#0b0b0b" stroke-width="1.25"><path d="M678 267.2 L834.4 281"/><path d="M712.5 241.9 L851 254.4"/><path d="M677.8 604.4 L834.4 619.3"/><path d="M713.4 242 Q698.4 246 697.7 268.5 L697.7 606 Q698.4 622.5 707.5 628.2"/><path d="M716.4 242.2 Q701.2 246.4 700.5 268.6 L700.5 606.2 Q701.2 622.6 710.4 628.5"/><path d="M700 241 L933.8 219.2 L948 220.4" stroke-width="0.8"/></g><path d="M834.4 281 Q835.2 257.6 851 254.4 L1089 232.6 Q1109 232 1109.5 249 L1109.5 594 Q1109.6 616.5 1092.5 619.4 L851 641 Q835.4 637.6 834.4 619.3 Z" fill="#1b1b1b"/><g clip-path="url(#cOpen)"><rect x="840" y="240" width="270" height="400" fill="#1b1b1b"/><path d="M952.5 262 L1056.2 254 L1056.2 587.3 L952.5 578.4 Z" fill="#2a2a2a"/><path d="M846 586.9 L928.8 580.6 L952.5 578.4 L1056 587.3 L846 606 Z" fill="#232323"/><path d="M952.5 262 L952.5 578.4 L1056 587.3 M846 586.9 L952.5 578.4" fill="none" stroke="#0b0b0b" stroke-width="1"/><path d="M845 588.2 L889 585.5 Q903 585.2 907.5 588.6 Q903 591 895 590.8 L845 593.4 Z" fill="#272727" stroke="#0b0b0b" stroke-width="0.8"/><path d="M873.8 587.4 L887.6 586.6 L887.6 590.4 L873.8 591.2 Z" fill="#1a1a1a" stroke="#101010" stroke-width="0.6"/><path d="M846 591.6 L872 590.4" stroke="#141414" stroke-width="0.8"/><path d="M945 542.5 L984.4 546.9 L984.4 583.4 L971.9 583.1 L927.6 578.8 L927.9 562 Q929.6 546 945 542.5 Z" fill="url(#gBossB)" stroke="#0b0b0b" stroke-width="1"/><path d="M984.4 546.9 A14 20.6 0 0 0 970.4 567.5 L971.9 583.1 L995 581.3 L995 550.4 Q994.8 548 991.5 547.6 Z" fill="#1c1c1c" stroke="#0b0b0b" stroke-width="1"/><ellipse cx="984.4" cy="567" rx="8.2" ry="12" fill="url(#gHoleB)" stroke="#0b0b0b" stroke-width="1"/><path d="M929.4 266 L929.4 272.2 Q932 283.4 942.5 285.6 L981.3 289.5 L984 289.5 L984 256 Z" fill="url(#gBossT)" stroke="#0b0b0b" stroke-width="1"/><path d="M970.4 256 L970.4 270 A14 20.6 0 0 0 984.4 290.6 Q995.2 290.4 995.6 284.6 L995.6 254 Z" fill="#1c1c1c" stroke="#0b0b0b" stroke-width="1"/><ellipse cx="984.4" cy="270" rx="8.1" ry="12" fill="url(#gHoleT)" stroke="#0b0b0b" stroke-width="1"/><path d="M845 274.5 L1064.4 253.2 L1064.4 598.1 L845 617.6 L845 606.1 L1056.2 587.3 L1056.2 259.6 L845 279.5 Z" fill="#1c1c1c"/><path d="M845 279.5 L1056.2 259.6 L1056.2 587.3 L845 606.1" fill="none" stroke="#0b0b0b" stroke-width="1"/><path d="M1064.4 253.2 L1094.4 250.3 L1094.4 601 L1064.4 598.1 Z" fill="#282828"/><path d="M845 617.6 L1064.4 598.1 L1094.4 601 L1096 602.6 L845 625.2 Z" fill="url(#gCham)"/><path d="M845 270.6 L1099 247.9 L1099 250 L845 274.5 Z" fill="#141414"/><path d="M1094.4 250.3 L1099 248 L1099 603 L1094.4 601 Z" fill="#1d1d1d"/><g fill="none" stroke="#0b0b0b" stroke-width="1"><path d="M845 274.5 L1064.4 253.2 L1094.4 250.3"/><path d="M1064.4 253.2 L1064.4 598.1 L845 617.6"/><path d="M1064.4 598.1 L1094.4 601"/><path d="M1094.4 250.3 L1094.4 601"/></g><path d="M845 625 L1096.5 602.3" stroke="#8e8e8e" stroke-width="1.1" fill="none"/></g><path d="M845.6 272 Q845.6 270.6 847 270.5 L1097 248.1 Q1098.4 248 1098.4 249.4 L1097.9 601 Q1097.9 602.4 1096.4 602.5 L847 626.2 Q845.6 626.3 845.6 625 Z" fill="none" stroke="#0b0b0b" stroke-width="1.3"/><path d="M834.4 281 Q835.2 257.6 851 254.4 L1089 232.6 M834.4 281 L834.4 619.3 Q835.4 637.6 851 641" fill="none" stroke="#0b0b0b" stroke-width="1.3"/><path d="M677.8 266 Q678.4 243.5 696 240 L933.8 217.6 L1094 231.9 Q1109.4 233.4 1109.5 249 L1109.5 594 Q1109.6 616.5 1092.5 619.4 L851 641 L694.5 627.2 Q678.6 624.8 677.8 606 Z" fill="none" stroke="#0b0b0b" stroke-width="1.5" stroke-linejoin="round"/></svg>
<div style="left:0px;top:867.5px;width:1600px;height:32.5px;background:#1b1b1b;"></div>
<div style="left:40.5px;top:867.5px;width:239px;height:32.5px;background:#303030;"></div>
<div style="left:40.5px;top:867.5px;width:239px;height:1px;background:#555;"></div>
<div style="left:279px;top:867.5px;width:1px;height:32.5px;background:#484848;"></div>
<svg style="left:12.5px;top:876px;" width="15" height="15"><path d="M0.6 2.4 L6.4 1.6 V7 H0.6 Z M7.4 1.4 L14.6 0.4 V7 H7.4 Z M0.6 8 H6.4 V13.4 L0.6 12.6 Z M7.4 8 H14.6 V14.6 L7.4 13.6 Z" fill="#ffffff"/></svg>
<svg style="left:49px;top:875px;" width="16" height="16"><circle cx="9.6" cy="6.2" r="4.6" fill="none" stroke="#e8e8e8" stroke-width="1.3"/><path d="M6.4 9.6 L1.4 14.8" stroke="#e8e8e8" stroke-width="1.4"/></svg>
<svg style="left:291px;top:875px;" width="17" height="16"><rect x="3.2" y="4" width="9" height="8" fill="none" stroke="#f0f0f0" stroke-width="1.2"/><path d="M1.2 2.4 V1 H11.6 M1.2 13.6 V15 H11.6" fill="none" stroke="#f0f0f0" stroke-width="1.1"/><path d="M14.6 1.6 V14.4" stroke="#f0f0f0" stroke-width="1.2"/><circle cx="14.6" cy="5.6" r="1.3" fill="#f0f0f0"/></svg>
<svg style="left:332px;top:874px;" width="21" height="18"><path d="M1.4 2.4 H8 L9.6 4 H19 V15.6 H1.4 Z" fill="#f2b523"/><path d="M1.4 5.2 H19.6 V15.6 H1.4 Z" fill="#fcd462"/><path d="M1.4 2.4 H8 L9 3.4 H1.4 Z" fill="#e09c16"/><path d="M5.4 10 H15.6 V15.6 H5.4 Z" fill="#3b9be8"/><rect x="8.2" y="12.4" width="4.6" height="3.2" fill="#fcd462"/><rect x="5.4" y="15" width="10.2" height="1.2" fill="#2a7fd0"/></svg>
<svg style="left:372px;top:872px;" width="22" height="22"><defs><radialGradient id="ff1" cx="0.7" cy="0.15" r="1"><stop offset="0" stop-color="#fff36a"/><stop offset="0.35" stop-color="#ff9a1f"/><stop offset="0.7" stop-color="#f5393f"/><stop offset="1" stop-color="#c1187a"/></radialGradient><radialGradient id="ff2" cx="0.5" cy="0.4" r="0.6"><stop offset="0" stop-color="#9059ff"/><stop offset="1" stop-color="#5b2bd6"/></radialGradient></defs><path d="M11 3.2 Q12.6 1.6 13.2 0.4 Q16 2.6 16.6 5.4 Q18.4 4.6 18.4 3 Q21.4 7 20.8 12 Q19.8 19.4 12.4 20.8 Q4.4 21.4 1.6 14.6 Q0.2 10 2.6 5.6 Q3 7.4 4 8 Q4.4 4.8 7 3.6 Q9 3 11 3.2 Z" fill="url(#ff1)"/><circle cx="10.6" cy="11.6" r="5" fill="url(#ff2)"/><path d="M4 8.6 Q7 6 10.6 7.8 Q8 8.6 7.6 10.6 Q9 12.6 12 11.4 Q13.6 10.4 13.2 8.4 Q16.4 11 14.6 14.8 Q11.6 18.6 7 16.6 Q3.4 14 4 8.6 Z" fill="#ff8a1f" opacity="0.92"/></svg>
<div style="left:367px;top:898px;width:33px;height:2px;background:#76b9ed;"></div>
<svg style="left:413px;top:872px;" width="22" height="22"><defs><clipPath id="cc1"><circle cx="10.6" cy="10.8" r="9.8"/></clipPath></defs><g clip-path="url(#cc1)"><rect x="0" y="0" width="22" height="22" fill="#e33b2e"/><path d="M10.6 10.8 L2 5.6 L-2 12 L6 24 L10.6 22 L14.8 13.2 Z" fill="#2da94f"/><path d="M10.6 10.8 L14.8 13.2 L9 24 L24 24 L24 6.4 L12 6.4 Z" fill="#fcc934"/></g><circle cx="10.6" cy="10.8" r="4.7" fill="#fff"/><circle cx="10.6" cy="10.8" r="3.7" fill="#3e82f1"/><circle cx="16.4" cy="16.4" r="4.8" fill="#e9e6df" stroke="#8a8a8a" stroke-width="0.5"/><path d="M14 16 H18.8 L18.2 19.8 H14.6 Z" fill="#7a5632"/><path d="M16.4 16 Q14.2 14 15.4 12.8 Q16.4 13.6 16.4 16 Q16.6 13.6 17.8 13 Q18.6 14.4 16.4 16" fill="#3d7a35"/></svg>
<svg style="left:454px;top:872px;" width="22" height="22"><defs><clipPath id="cc2"><circle cx="10.6" cy="10.8" r="9.8"/></clipPath></defs><g clip-path="url(#cc2)"><rect x="0" y="0" width="22" height="22" fill="#e33b2e"/><path d="M10.6 10.8 L2 5.6 L-2 12 L6 24 L10.6 22 L14.8 13.2 Z" fill="#2da94f"/><path d="M10.6 10.8 L14.8 13.2 L9 24 L24 24 L24 6.4 L12 6.4 Z" fill="#fcc934"/></g><circle cx="10.6" cy="10.8" r="4.7" fill="#fff"/><circle cx="10.6" cy="10.8" r="3.7" fill="#3e82f1"/><circle cx="16.4" cy="16.4" r="4.8" fill="#24508e" stroke="#1b3b6a" stroke-width="0.5"/><path d="M13.8 18.6 L15.4 14 L16.6 17.6 L17.6 13.6 L18.8 18.4" fill="none" stroke="#e6eefb" stroke-width="0.9"/></svg>
<svg style="left:496px;top:872px;" width="19" height="22"><path d="M4.6 1.6 L6.2 0.6 H12.8 L14.4 1.6 L15.8 1.4 L17.6 4 L17 6 L17.8 8.6 L15.6 16 Q14.6 18 9.5 21.4 Q4.4 18 3.4 16 L1.2 8.6 L2 6 L1.4 4 L3.2 1.4 Z" fill="#fb542b"/><path d="M9.5 4.4 L12 4 L14 5.6 L13.2 7.4 L14.6 9 L13.6 10.8 L11.4 12 L11.6 13.2 L9.5 14.6 L7.4 13.2 L7.6 12 L5.4 10.8 L4.4 9 L5.8 7.4 L5 5.6 L7 4 Z" fill="#fff"/><path d="M9.5 15.4 L11.4 16.4 L9.5 18 L7.6 16.4 Z" fill="#fff"/><path d="M6.6 7.6 L8.4 8.4 L7.8 9.4 L6.4 8.8 Z M12.4 7.6 L10.6 8.4 L11.2 9.4 L12.6 8.8 Z M9.5 10 L10.4 11.6 H8.6 Z" fill="#fb542b"/></svg>
<svg style="left:535.5px;top:872px;" width="22" height="22"><defs><linearGradient id="qb" x1="0" y1="0" x2="0" y2="1"><stop offset="0" stop-color="#8cc0f0"/><stop offset="1" stop-color="#4f8fd6"/></linearGradient></defs><circle cx="11" cy="11" r="10" fill="url(#qb)" stroke="#3a72b6" stroke-width="0.8"/></svg>
<svg style="left:576.5px;top:872px;" width="22" height="22"><circle cx="11" cy="11" r="9.8" fill="#1ed760"/><path d="M5.4 8 Q11.4 6 17 9" fill="none" stroke="#111" stroke-width="1.9" stroke-linecap="round"/><path d="M6 11.2 Q11.2 9.6 16 12" fill="none" stroke="#111" stroke-width="1.6" stroke-linecap="round"/><path d="M6.6 14.2 Q11 13 15 14.8" fill="none" stroke="#111" stroke-width="1.3" stroke-linecap="round"/></svg>
<div style="left:571px;top:898px;width:33px;height:2px;background:#76b9ed;"></div>
<div style="left:608px;top:867.5px;width:38.5px;height:32.5px;background:#3e3e3e;"></div>
<div style="left:646.5px;top:868px;width:1px;height:32px;background:#555;"></div>
<div style="left:608px;top:898px;width:40px;height:2px;background:#76b9ed;"></div>
<svg style="left:617px;top:872px;" width="23" height="22"><path d="M1.6 5.6 L10 2 L18.6 4.6 V14.4 L10.4 18.4 L1.6 15.2 Z" fill="#d8232a"/><path d="M1.6 5.6 L10 2 L18.6 4.6 L10.4 8.4 Z" fill="#ee4a44"/><path d="M10.4 8.4 L18.6 4.6 V14.4 L10.4 18.4 Z" fill="#a8151c"/><path d="M7.6 8.4 Q4.4 7.4 4.4 9.6 Q4.6 11 6.4 11.4 Q8 12 7.4 13.2 Q6.4 14 4.2 13" fill="none" stroke="#fff" stroke-width="1.3"/><path d="M11.6 8.4 L12.8 13.6 L14.4 9.4 L15.8 12.6 L17.4 6.4" fill="none" stroke="#fff" stroke-width="1.2"/><rect x="4.4" y="13.2" width="17" height="7.6" rx="1.2" fill="#111"/></svg>
<svg style="left:659px;top:873px;" width="20" height="20"><path d="M4.6 1.4 H18.4 V14 L14 18.6 H1.4 V4.6 Z" fill="#1f6fe6" stroke="#e6efff" stroke-width="1.2" stroke-linejoin="round"/><path d="M13 7.6 Q9.6 5.6 7.4 8.4 Q6.2 11.2 8.4 13 Q10.8 14.4 13 12.6" fill="none" stroke="#fff" stroke-width="1.5" stroke-linecap="round"/></svg>
<svg style="left:699.5px;top:872.5px;" width="21" height="21"><rect x="0.6" y="0.6" width="19.8" height="19.8" rx="4" fill="#12b24c"/><path d="M6 4.4 H9.4 V10 H6 Z M6 11.4 H9.4 V16.6 H6 Z M11.2 4.4 H14.6 V8 H11.2 Z M11.2 9.4 H14.6 V16.6 H11.2 Z" fill="#fff"/></svg>
<div style="left:693px;top:898px;width:34px;height:2px;background:#76b9ed;"></div>
<svg style="left:740.5px;top:872.5px;" width="21" height="21"><rect x="0.4" y="0.4" width="20.2" height="20.2" rx="3.6" fill="#131722"/><path d="M2.6 6.6 H9 V14.4 H6 V9.6 H2.6 Z" fill="#fff"/><circle cx="11.4" cy="8" r="1.5" fill="#fff"/><path d="M15 6.6 H18.6 L15.2 14.4 H11.6 Z" fill="#fff"/></svg>
<svg style="left:1245px;top:873px;" width="22" height="21"><defs><radialGradient id="sun" cx="0.4" cy="0.4" r="0.7"><stop offset="0" stop-color="#ffc83a"/><stop offset="1" stop-color="#f07c14"/></radialGradient></defs><circle cx="9.4" cy="11" r="8.4" fill="url(#sun)"/><path d="M8.6 17 Q6.6 16.8 6.8 15 Q7 13.4 9 13.6 Q9.8 11.4 12.4 11.8 Q14.6 12.2 14.8 14 Q17.2 13.8 17.4 15.6 Q17.4 17 15.8 17 Z" fill="#cfe3f7"/><circle cx="14.6" cy="4.6" r="4.2" fill="#d8282e"/></svg>
<svg style="left:1400px;top:879px;" width="14" height="9"><path d="M1.4 7.4 L7 1.8 L12.6 7.4" fill="none" stroke="#f0f0f0" stroke-width="1.3"/></svg>
<svg style="left:1421px;top:876px;" width="14" height="17"><rect x="1.4" y="5" width="8" height="7" rx="1.6" fill="none" stroke="#f0f0f0" stroke-width="1.1"/><path d="M9.6 7.6 L12.6 6 V11 L9.6 9.4" fill="none" stroke="#f0f0f0" stroke-width="1"/><path d="M2.6 3 Q2.8 1 5 1 H6.6 Q8.6 1 8.8 3 M2.6 14 Q2.8 16 5 16 H6.6 Q8.6 16 8.8 14" fill="none" stroke="#f0f0f0" stroke-width="1"/></svg>
<svg style="left:1439px;top:878px;" width="17" height="13"><rect x="3.4" y="3.4" width="11.4" height="7" fill="none" stroke="#f0f0f0" stroke-width="1.1"/><rect x="15" y="5.4" width="1.2" height="3" fill="#f0f0f0"/><rect x="4.8" y="4.8" width="6" height="4.2" fill="#f0f0f0"/><path d="M1 1 H5 V3 M2.2 3 V5.6 M3.8 3 V5.6 M1 3 H5" fill="none" stroke="#f0f0f0" stroke-width="1"/></svg>
<svg style="left:1462px;top:877px;" width="14" height="14"><path d="M1.6 12.6 A11 11 0 0 1 12.6 1.6" fill="none" stroke="#f0f0f0" stroke-width="1.1"/><path d="M4.6 12.6 A8 8 0 0 1 12.6 4.6" fill="none" stroke="#f0f0f0" stroke-width="1.1"/><path d="M7.6 12.6 A5 5 0 0 1 12.6 7.6" fill="none" stroke="#f0f0f0" stroke-width="1.1"/><circle cx="11.6" cy="11.6" r="1.3" fill="#f0f0f0"/></svg>
<svg style="left:1479px;top:876px;" width="16" height="16"><path d="M1.4 6 H4 L7.6 2.6 V13.4 L4 10 H1.4 Z" fill="none" stroke="#f0f0f0" stroke-width="1.1" stroke-linejoin="round"/><path d="M9.6 5.6 Q11 8 9.6 10.4 M11.6 3.8 Q14 8 11.6 12.2" fill="none" stroke="#f0f0f0" stroke-width="1"/><path d="M13.6 2.4 Q16.4 8 13.6 13.6" fill="none" stroke="#8a8a8a" stroke-width="0.9"/></svg>
<svg style="left:1565px;top:877px;" width="16" height="16"><path d="M1.6 1.6 H14 V11 H9.4 L7.8 13.4 L6.2 11 H1.6 Z" fill="none" stroke="#f0f0f0" stroke-width="1.2" stroke-linejoin="round"/></svg>
<div style="left:1597px;top:868px;width:1px;height:32px;background:#5a5a5a;"></div>
<span style="left:26px;top:4.92px;font-size:10.71px;line-height:21.42px;color:#ffffff;font-weight:bold;font-style:italic;transform-origin:0 50%;transform:rotate(0.03deg) scaleX(0.9471);">SOLID</span>
<span style="left:56.6px;top:4.92px;font-size:10.71px;line-height:21.42px;color:#ffffff;font-style:italic;transform-origin:0 50%;transform:rotate(0.03deg) scaleX(0.9098);">WORKS</span>
<span style="left:119.5px;top:6.28px;font-size:10.3px;line-height:20.6px;color:#f2f2f2;letter-spacing:0.000px;transform-origin:0 50%;transform:rotate(0.03deg) scaleX(0.9034);">File</span>
<span style="left:147.5px;top:6.28px;font-size:10.3px;line-height:20.6px;color:#f2f2f2;letter-spacing:0.000px;transform-origin:0 50%;transform:rotate(0.03deg) scaleX(0.9290);">Edit</span>
<span style="left:178px;top:6.28px;font-size:10.3px;line-height:20.6px;color:#f2f2f2;letter-spacing:0.000px;transform-origin:0 50%;transform:rotate(0.03deg) scaleX(0.9254);">View</span>
<span style="left:211.5px;top:6.28px;font-size:10.3px;line-height:20.6px;color:#f2f2f2;letter-spacing:0.000px;transform-origin:0 50%;transform:rotate(0.03deg) scaleX(0.9505);">Insert</span>
<span style="left:249px;top:6.28px;font-size:10.3px;line-height:20.6px;color:#f2f2f2;letter-spacing:0.000px;transform-origin:0 50%;transform:rotate(0.03deg) scaleX(0.9353);">Tools</span>
<span style="left:285px;top:6.27px;font-size:10.3px;line-height:20.6px;color:#f2f2f2;letter-spacing:0.000px;transform-origin:0 50%;transform:rotate(0.03deg) scaleX(0.9566);">Simulation</span>
<span style="left:344px;top:6.27px;font-size:10.3px;line-height:20.6px;color:#f2f2f2;letter-spacing:0.073px;transform-origin:0 50%;transform:rotate(0.03deg) scaleX(1.0000);">Window</span>
<span style="left:994px;top:5.87px;font-size:10.3px;line-height:20.6px;color:#e6e6e6;letter-spacing:0.000px;transform-origin:0 50%;transform:rotate(0.03deg) scaleX(0.9336);">Indicator_V3</span>
<span style="left:1274.5px;top:5.87px;font-size:10.3px;line-height:20.6px;color:#5c5c5c;letter-spacing:-0.006px;transform-origin:0 50%;transform:rotate(0.03deg) scaleX(0.8800);">Search Commands</span>
<span style="left:6.5px;top:97.18px;font-size:10.3px;line-height:20.6px;color:#f2f2f2;letter-spacing:0.000px;transform-origin:0 50%;transform:rotate(0.03deg) scaleX(0.9102);">Features</span>
<span style="left:56.5px;top:97.18px;font-size:10.3px;line-height:20.6px;color:#ffffff;font-weight:bold;letter-spacing:0.000px;transform-origin:0 50%;transform:rotate(0.03deg) scaleX(0.9618);">Sketch</span>
<span style="left:103.5px;top:97.17px;font-size:10.3px;line-height:20.6px;color:#f2f2f2;letter-spacing:0.000px;transform-origin:0 50%;transform:rotate(0.03deg) scaleX(0.9880);">Mesh Modeling</span>
<span style="left:186px;top:97.17px;font-size:10.3px;line-height:20.6px;color:#f2f2f2;letter-spacing:0.000px;transform-origin:0 50%;transform:rotate(0.03deg) scaleX(0.9704);">Data Migration</span>
<span style="left:265px;top:97.18px;font-size:10.3px;line-height:20.6px;color:#f2f2f2;letter-spacing:0.000px;transform-origin:0 50%;transform:rotate(0.03deg) scaleX(0.9897);">Markup</span>
<span style="left:312.5px;top:97.18px;font-size:10.3px;line-height:20.6px;color:#f2f2f2;letter-spacing:0.000px;transform-origin:0 50%;transform:rotate(0.03deg) scaleX(0.9105);">Evaluate</span>
<span style="left:362.5px;top:97.17px;font-size:10.3px;line-height:20.6px;color:#f2f2f2;letter-spacing:0.000px;transform-origin:0 50%;transform:rotate(0.03deg) scaleX(0.9490);">MBD Dimensions</span>
<span style="left:452px;top:97.16px;font-size:10.3px;line-height:20.6px;color:#f2f2f2;letter-spacing:0.000px;transform-origin:0 50%;transform:rotate(0.03deg) scaleX(0.9014);">SOLIDWORKS Add-Ins</span>
<span style="left:562.5px;top:97.18px;font-size:10.3px;line-height:20.6px;color:#f2f2f2;letter-spacing:0.000px;transform-origin:0 50%;transform:rotate(0.03deg) scaleX(0.9878);">Simulation</span>
<span style="left:629px;top:97.19px;font-size:10.3px;line-height:20.6px;color:#f2f2f2;letter-spacing:0.000px;transform-origin:0 50%;transform:rotate(0.03deg) scaleX(0.9606);">MBD</span>
<span style="left:670.5px;top:97.17px;font-size:10.3px;line-height:20.6px;color:#f2f2f2;letter-spacing:0.000px;transform-origin:0 50%;transform:rotate(0.03deg) scaleX(0.9370);">Analysis Preparation</span>
<span style="left:772.5px;top:97.17px;font-size:10.3px;line-height:20.6px;color:#f2f2f2;letter-spacing:0.000px;transform-origin:0 50%;transform:rotate(0.03deg) scaleX(0.8895);">SOLIDWORKS CAM</span>
<span style="left:873.5px;top:97.16px;font-size:10.3px;line-height:20.6px;color:#f2f2f2;letter-spacing:0.000px;transform-origin:0 50%;transform:rotate(0.03deg) scaleX(0.8961);">SOLIDWORKS CAM TBM</span>
<span style="left:66px;top:834.68px;font-size:10.3px;line-height:20.6px;color:#ffffff;font-weight:bold;letter-spacing:0.000px;transform-origin:0 50%;transform:rotate(0.03deg) scaleX(0.9744);">Model</span>
<span style="left:112px;top:834.68px;font-size:10.3px;line-height:20.6px;color:#f2f2f2;letter-spacing:0.000px;transform-origin:0 50%;transform:rotate(0.03deg) scaleX(0.8887);">3D Views</span>
<span style="left:167.5px;top:834.67px;font-size:10.3px;line-height:20.6px;color:#f2f2f2;letter-spacing:0.000px;transform-origin:0 50%;transform:rotate(0.03deg) scaleX(0.9753);">Motion Study 1</span>
<span style="left:1px;top:850.02px;font-size:10.3px;line-height:20.6px;color:#f2f2f2;letter-spacing:0.000px;transform-origin:0 50%;transform:rotate(0.03deg) scaleX(0.9316);">SOLIDWORKS Student Edition - Academic Use Only</span>
<span style="left:1362px;top:850.07px;font-size:10.3px;line-height:20.6px;color:#f2f2f2;letter-spacing:0.000px;transform-origin:0 50%;transform:rotate(0.03deg) scaleX(0.9672);">Editing Part</span>
<span style="left:1511.5px;top:850.08px;font-size:10.3px;line-height:20.6px;color:#f2f2f2;letter-spacing:0.000px;transform-origin:0 50%;transform:rotate(0.03deg) scaleX(0.9514);">MMGS</span>
<span style="left:9.5px;top:47.18px;font-size:10.3px;line-height:20.6px;color:#f2f2f2;letter-spacing:0.000px;transform-origin:0 50%;transform:rotate(0.03deg) scaleX(0.8890);">Sketch</span>
<span style="left:56.5px;top:47.19px;font-size:10.3px;line-height:20.6px;color:#f2f2f2;letter-spacing:0.000px;transform-origin:0 50%;transform:rotate(0.03deg) scaleX(0.8916);">Smart</span>
<span style="left:46px;top:58.18px;font-size:10.3px;line-height:20.6px;color:#f2f2f2;letter-spacing:0.000px;transform-origin:0 50%;transform:rotate(0.03deg) scaleX(0.9349);">Dimension</span>
<span style="left:233px;top:47.19px;font-size:10.3px;line-height:20.6px;color:#929292;letter-spacing:0.000px;transform-origin:0 50%;transform:rotate(0.03deg) scaleX(0.8905);">Trim</span>
<span style="left:227px;top:58.18px;font-size:10.3px;line-height:20.6px;color:#929292;letter-spacing:0.000px;transform-origin:0 50%;transform:rotate(0.03deg) scaleX(0.9174);">Entities</span>
<span style="left:267px;top:47.18px;font-size:10.3px;line-height:20.6px;color:#f2f2f2;letter-spacing:0.000px;transform-origin:0 50%;transform:rotate(0.03deg) scaleX(0.9148);">Convert</span>
<span style="left:268px;top:58.18px;font-size:10.3px;line-height:20.6px;color:#f2f2f2;letter-spacing:0.000px;transform-origin:0 50%;transform:rotate(0.03deg) scaleX(0.9174);">Entities</span>
<span style="left:311px;top:47.19px;font-size:10.3px;line-height:20.6px;color:#929292;letter-spacing:0.000px;transform-origin:0 50%;transform:rotate(0.03deg) scaleX(0.9710);">Offset</span>
<span style="left:309px;top:58.18px;font-size:10.3px;line-height:20.6px;color:#929292;letter-spacing:0.000px;transform-origin:0 50%;transform:rotate(0.03deg) scaleX(0.8878);">Entities</span>
<span style="left:351px;top:47.19px;font-size:10.3px;line-height:20.6px;color:#f2f2f2;letter-spacing:0.000px;transform-origin:0 50%;transform:rotate(0.03deg) scaleX(0.9710);">Offset</span>
<span style="left:357.5px;top:58.19px;font-size:10.3px;line-height:20.6px;color:#f2f2f2;letter-spacing:0.000px;transform-origin:0 50%;transform:rotate(0.03deg) scaleX(0.9810);">On</span>
<span style="left:348.5px;top:69.18px;font-size:10.3px;line-height:20.6px;color:#f2f2f2;letter-spacing:0.000px;transform-origin:0 50%;transform:rotate(0.03deg) scaleX(0.8871);">Surface</span>
<span style="left:407.5px;top:31.46px;font-size:10.3px;line-height:20.6px;color:#929292;letter-spacing:0.000px;transform-origin:0 50%;transform:rotate(0.03deg) scaleX(0.9524);">Mirror Entities</span>
<span style="left:407.5px;top:52.95px;font-size:10.3px;line-height:20.6px;color:#929292;letter-spacing:0.000px;transform-origin:0 50%;transform:rotate(0.03deg) scaleX(0.9037);">Linear Sketch Pattern</span>
<span style="left:407.5px;top:74.57px;font-size:10.3px;line-height:20.6px;color:#929292;letter-spacing:0.000px;transform-origin:0 50%;transform:rotate(0.03deg) scaleX(0.9301);">Move Entities</span>
<span style="left:536px;top:47.17px;font-size:10.3px;line-height:20.6px;color:#929292;letter-spacing:0.000px;transform-origin:0 50%;transform:rotate(0.03deg) scaleX(0.9187);">Display/Delete</span>
<span style="left:547px;top:58.18px;font-size:10.3px;line-height:20.6px;color:#929292;letter-spacing:0.000px;transform-origin:0 50%;transform:rotate(0.03deg) scaleX(0.9081);">Relations</span>
<span style="left:606px;top:47.18px;font-size:10.3px;line-height:20.6px;color:#929292;letter-spacing:0.000px;transform-origin:0 50%;transform:rotate(0.03deg) scaleX(0.9060);">Repair</span>
<span style="left:606px;top:58.18px;font-size:10.3px;line-height:20.6px;color:#929292;letter-spacing:0.000px;transform-origin:0 50%;transform:rotate(0.03deg) scaleX(0.8890);">Sketch</span>
<span style="left:646px;top:47.19px;font-size:10.3px;line-height:20.6px;color:#f2f2f2;letter-spacing:0.000px;transform-origin:0 50%;transform:rotate(0.03deg) scaleX(0.9112);">Quick</span>
<span style="left:645.5px;top:58.18px;font-size:10.3px;line-height:20.6px;color:#f2f2f2;letter-spacing:-0.201px;transform-origin:0 50%;transform:rotate(0.03deg) scaleX(0.8800);">Snaps</span>
<span style="left:684px;top:47.19px;font-size:10.3px;line-height:20.6px;color:#f2f2f2;letter-spacing:0.000px;transform-origin:0 50%;transform:rotate(0.03deg) scaleX(0.8916);">Rapid</span>
<span style="left:682px;top:58.18px;font-size:10.3px;line-height:20.6px;color:#f2f2f2;letter-spacing:0.000px;transform-origin:0 50%;transform:rotate(0.03deg) scaleX(0.8890);">Sketch</span>
<span style="left:718.5px;top:47.18px;font-size:10.3px;line-height:20.6px;color:#f2f2f2;letter-spacing:0.000px;transform-origin:0 50%;transform:rotate(0.03deg) scaleX(0.9413);">Instant2D</span>
<span style="left:771.5px;top:47.18px;font-size:10.3px;line-height:20.6px;color:#929292;letter-spacing:0.000px;transform-origin:0 50%;transform:rotate(0.03deg) scaleX(0.9289);">Shaded</span>
<span style="left:774.5px;top:58.18px;font-size:10.3px;line-height:20.6px;color:#929292;letter-spacing:0.000px;transform-origin:0 50%;transform:rotate(0.03deg) scaleX(0.8890);">Sketch</span>
<span style="left:768.5px;top:69.18px;font-size:10.3px;line-height:20.6px;color:#929292;letter-spacing:0.000px;transform-origin:0 50%;transform:rotate(0.03deg) scaleX(0.9571);">Contours</span>
<span style="left:42.2px;top:179.35px;font-size:10.3px;line-height:20.6px;color:#f2f2f2;letter-spacing:0.000px;transform-origin:0 50%;transform:rotate(0.03deg) scaleX(0.9804);">Indicator_V3 (Bottom Mount) &lt;Di</span>
<span style="left:41.6px;top:197.27px;font-size:10.3px;line-height:20.6px;color:#f2f2f2;letter-spacing:0.000px;transform-origin:0 50%;transform:rotate(0.03deg) scaleX(0.9951);">History</span>
<span style="left:41.6px;top:215.61px;font-size:10.3px;line-height:20.6px;color:#f2f2f2;letter-spacing:0.000px;transform-origin:0 50%;transform:rotate(0.03deg) scaleX(0.8970);">Sensors</span>
<span style="left:41.6px;top:233.94px;font-size:10.3px;line-height:20.6px;color:#f2f2f2;letter-spacing:0.050px;transform-origin:0 50%;transform:rotate(0.03deg) scaleX(1.0000);">Annotations</span>
<span style="left:41.6px;top:252.27px;font-size:10.3px;line-height:20.6px;color:#f2f2f2;letter-spacing:0.000px;transform-origin:0 50%;transform:rotate(0.03deg) scaleX(0.9293);">Solid Bodies(2)</span>
<span style="left:41.6px;top:270.61px;font-size:10.3px;line-height:20.6px;color:#f2f2f2;letter-spacing:-0.140px;transform-origin:0 50%;transform:rotate(0.03deg) scaleX(0.8800);">ABS</span>
<span style="left:41.6px;top:288.95px;font-size:10.3px;line-height:20.6px;color:#f2f2f2;letter-spacing:0.000px;transform-origin:0 50%;transform:rotate(0.03deg) scaleX(0.9560);">Front Plane</span>
<span style="left:41.6px;top:307.29px;font-size:10.3px;line-height:20.6px;color:#f2f2f2;letter-spacing:0.000px;transform-origin:0 50%;transform:rotate(0.03deg) scaleX(0.9580);">Top Plane</span>
<span style="left:41.6px;top:325.62px;font-size:10.3px;line-height:20.6px;color:#f2f2f2;letter-spacing:0.000px;transform-origin:0 50%;transform:rotate(0.03deg) scaleX(0.9560);">Right Plane</span>
<span style="left:41.6px;top:343.96px;font-size:10.3px;line-height:20.6px;color:#f2f2f2;letter-spacing:0.084px;transform-origin:0 50%;transform:rotate(0.03deg) scaleX(1.0000);">Origin</span>
<span style="left:41.6px;top:362.30px;font-size:10.3px;line-height:20.6px;color:#f2f2f2;letter-spacing:0.000px;transform-origin:0 50%;transform:rotate(0.03deg) scaleX(0.9237);">Boss-Extrude1</span>
<span style="left:41.6px;top:380.63px;font-size:10.3px;line-height:20.6px;color:#f2f2f2;letter-spacing:0.000px;transform-origin:0 50%;transform:rotate(0.03deg) scaleX(0.9240);">Sketch2</span>
<span style="left:41.6px;top:398.97px;font-size:10.3px;line-height:20.6px;color:#f2f2f2;letter-spacing:0.000px;transform-origin:0 50%;transform:rotate(0.03deg) scaleX(0.9706);">Cut-Extrude2</span>
<span style="left:41.6px;top:417.29px;font-size:10.3px;line-height:20.6px;color:#f2f2f2;letter-spacing:0.000px;transform-origin:0 50%;transform:rotate(0.03deg) scaleX(0.9311);">Boss-Extrude2</span>
<span style="left:41.6px;top:435.63px;font-size:10.3px;line-height:20.6px;color:#f2f2f2;letter-spacing:0.000px;transform-origin:0 50%;transform:rotate(0.03deg) scaleX(0.9311);">Boss-Extrude5</span>
<span style="left:41.6px;top:453.96px;font-size:10.3px;line-height:20.6px;color:#f2f2f2;letter-spacing:0.000px;transform-origin:0 50%;transform:rotate(0.03deg) scaleX(0.9706);">Cut-Extrude3</span>
<span style="left:41.6px;top:472.31px;font-size:10.3px;line-height:20.6px;color:#f2f2f2;letter-spacing:0.000px;transform-origin:0 50%;transform:rotate(0.03deg) scaleX(0.9706);">Chamfer2</span>
<span style="left:41.6px;top:490.63px;font-size:10.3px;line-height:20.6px;color:#f2f2f2;letter-spacing:0.000px;transform-origin:0 50%;transform:rotate(0.03deg) scaleX(0.9311);">Boss-Extrude6</span>
<span style="left:41.6px;top:508.97px;font-size:10.3px;line-height:20.6px;color:#f2f2f2;letter-spacing:0.000px;transform-origin:0 50%;transform:rotate(0.03deg) scaleX(0.9706);">Cut-Extrude4</span>
<span style="left:41.6px;top:527.30px;font-size:10.3px;line-height:20.6px;color:#f2f2f2;letter-spacing:0.000px;transform-origin:0 50%;transform:rotate(0.03deg) scaleX(0.9706);">Cut-Extrude5</span>
<span style="left:41.6px;top:545.64px;font-size:10.3px;line-height:20.6px;color:#f2f2f2;letter-spacing:0.000px;transform-origin:0 50%;transform:rotate(0.03deg) scaleX(0.9706);">Chamfer3</span>
<span style="left:41.6px;top:563.97px;font-size:10.3px;line-height:20.6px;color:#f2f2f2;letter-spacing:0.000px;transform-origin:0 50%;transform:rotate(0.03deg) scaleX(0.9425);">Fillet1</span>
<span style="left:41.6px;top:582.31px;font-size:10.3px;line-height:20.6px;color:#f2f2f2;letter-spacing:0.000px;transform-origin:0 50%;transform:rotate(0.03deg) scaleX(0.9706);">Cut-Extrude6</span>
<span style="left:41.6px;top:600.65px;font-size:10.3px;line-height:20.6px;color:#f2f2f2;letter-spacing:0.000px;transform-origin:0 50%;transform:rotate(0.03deg) scaleX(0.9706);">Chamfer4</span>
<span style="left:41.6px;top:618.98px;font-size:10.3px;line-height:20.6px;color:#f2f2f2;letter-spacing:0.000px;transform-origin:0 50%;transform:rotate(0.03deg) scaleX(0.9706);">Chamfer5</span>
<span style="left:222.8px;top:750.70px;font-size:6.59px;line-height:13.18px;color:#2a8a3a;font-weight:bold;transform-origin:0 50%;transform:rotate(0.03deg) scaleX(1.1370);">Y</span>
<span style="left:245px;top:779.81px;font-size:5.77px;line-height:11.54px;color:#e8281e;font-weight:bold;transform-origin:0 50%;transform:rotate(0.03deg) scaleX(1.0348);">X</span>
<span style="left:244.6px;top:785.28px;font-size:5.97px;line-height:11.94px;color:#1a1ad8;font-weight:bold;transform-origin:0 50%;transform:rotate(0.03deg) scaleX(1.0921);">Z</span>
<span style="left:74px;top:871.41px;font-size:12.77px;line-height:25.54px;color:#e4e4e4;letter-spacing:0.000px;transform-origin:0 50%;transform:rotate(0.03deg) scaleX(0.9394);">Type here to search</span>
<span style="left:540.3px;top:870.98px;font-size:12.57px;line-height:25.14px;color:#ffffff;transform-origin:0 50%;transform:rotate(0.03deg) scaleX(0.9287);">qb</span>
<span style="left:622.5px;top:881.86px;font-size:7.62px;line-height:15.24px;color:#ffffff;font-weight:bold;letter-spacing:0.000px;transform-origin:0 50%;transform:rotate(0.03deg) scaleX(0.9737);">2024</span>
<span style="left:1258.4px;top:871.04px;font-size:7.0px;line-height:14.0px;color:#ffffff;font-weight:bold;transform-origin:0 50%;transform:rotate(0.03deg) scaleX(0.7666);">1</span>
<span style="left:1272px;top:871.43px;font-size:12.77px;line-height:25.54px;color:#f2f2f2;letter-spacing:-0.424px;transform-origin:0 50%;transform:rotate(0.03deg) scaleX(0.8800);">19°C</span>
<span style="left:1303.5px;top:871.42px;font-size:12.77px;line-height:25.54px;color:#f2f2f2;letter-spacing:0.000px;transform-origin:0 50%;transform:rotate(0.03deg) scaleX(0.9082);">Meestal zonnig</span>
<span style="left:1515px;top:866.78px;font-size:10.3px;line-height:20.6px;color:#f2f2f2;letter-spacing:-0.056px;transform-origin:0 50%;transform:rotate(0.03deg) scaleX(0.8800);">20:42</span>
<span style="left:1503px;top:880.77px;font-size:10.3px;line-height:20.6px;color:#f2f2f2;letter-spacing:0.000px;transform-origin:0 50%;transform:rotate(0.03deg) scaleX(0.9310);">16/06/2025</span>
</div></body></html>
